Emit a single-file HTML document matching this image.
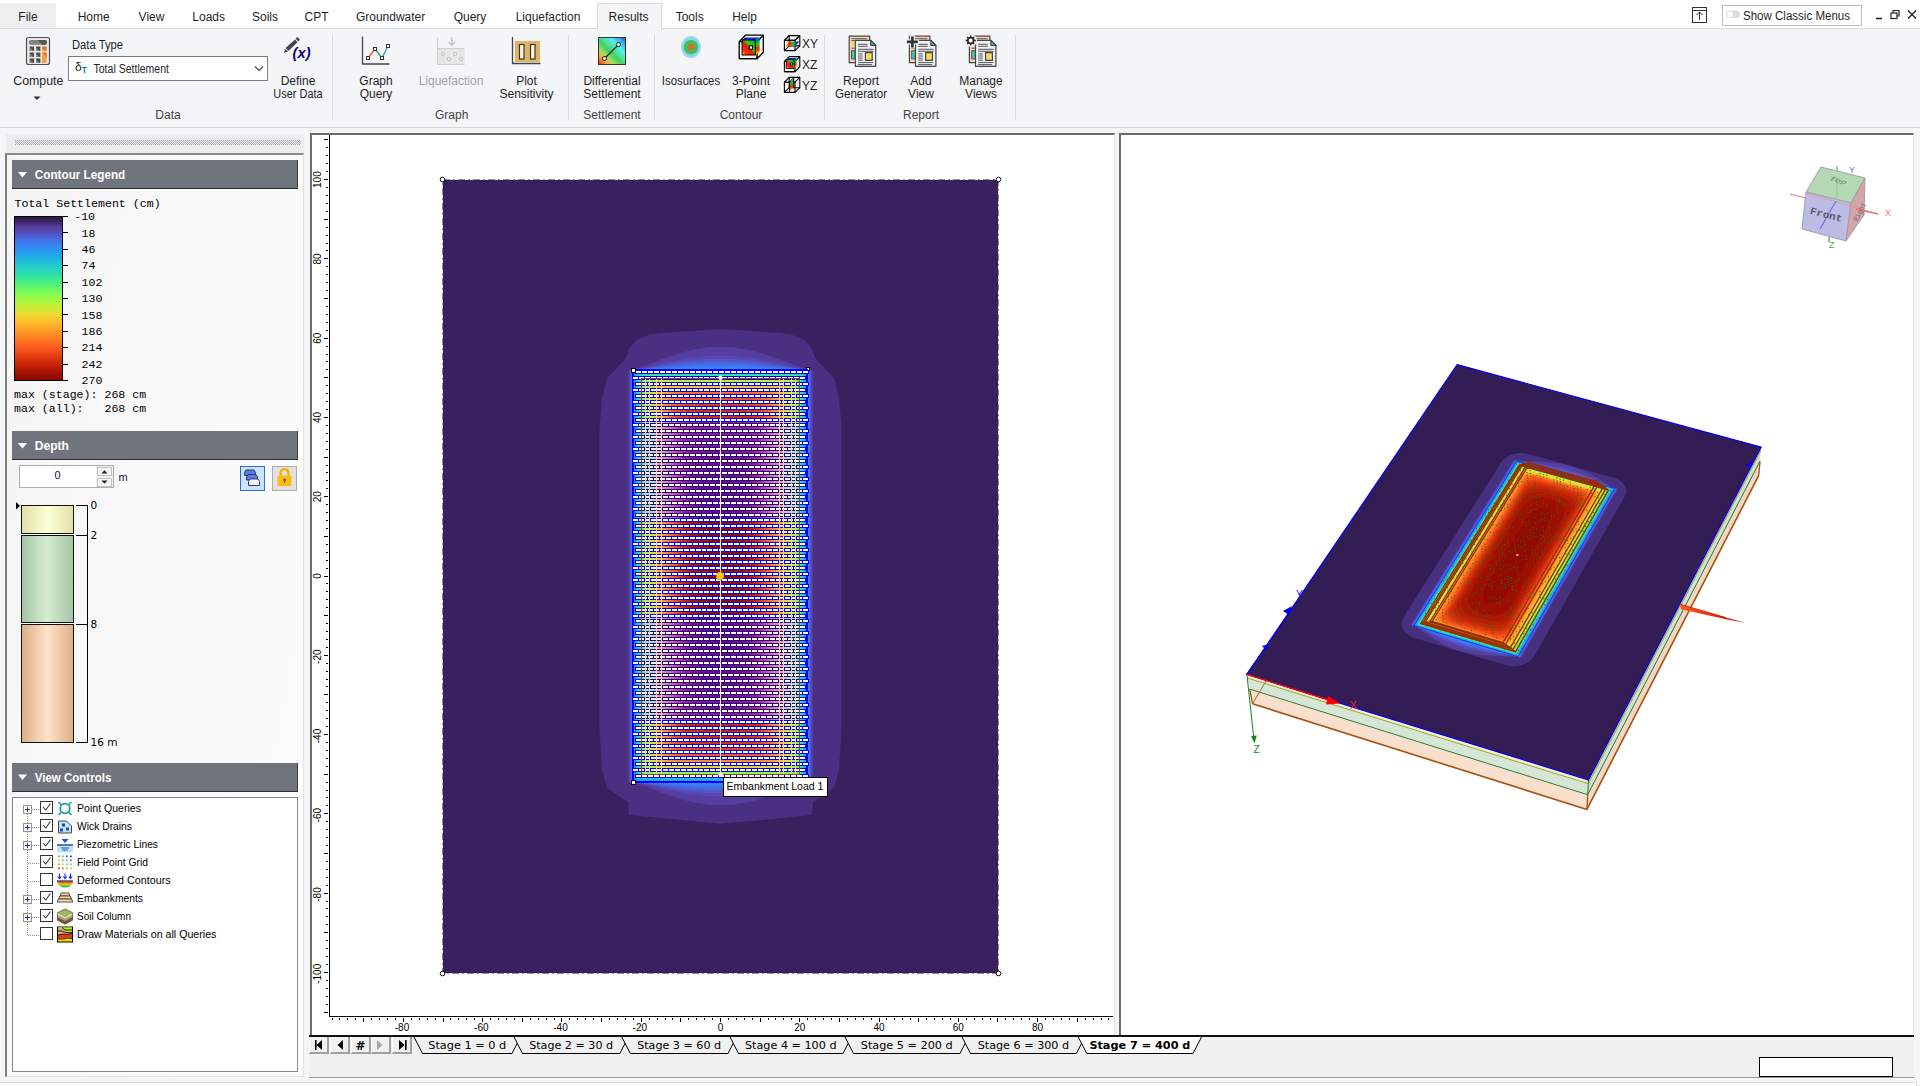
<!DOCTYPE html>
<html><head><meta charset="utf-8"><title>Settle3</title><style>
html,body{margin:0;padding:0}
body{width:1920px;height:1086px;position:relative;overflow:hidden;background:#f4f5f7;font-family:"Liberation Sans",sans-serif;font-size:12px;color:#1e1e1e}
.abs{position:absolute}
.t{position:absolute;white-space:nowrap;line-height:1}
svg{position:absolute;overflow:visible}
</style></head><body>
<div id="ribbon"><div class="abs" style="left:0px;top:0px;width:1920px;height:29px;background:#ffffff;"></div><div class="abs" style="left:0px;top:29px;width:1920px;height:99px;background:#f4f5f7;"></div><div class="abs" style="left:0px;top:28px;width:1920px;height:1px;background:#d8d9db;"></div><div class="abs" style="left:0px;top:127px;width:1920px;height:1px;background:#d6d7d9;"></div><div class="abs" style="left:0px;top:3px;width:56px;height:25px;background:#efefef;"></div><div class="abs" style="left:597px;top:3px;width:65px;height:26px;background:#f4f5f7;border:1px solid #d8d9db;box-sizing:border-box;border-bottom:none;"></div><div class="abs" style="left:1722px;top:5px;width:140px;height:21px;background:#ffffff;border:1px solid #bdbdbd;box-sizing:border-box;"></div><div class="abs" style="left:68px;top:56px;width:200px;height:25px;background:#ffffff;border:1px solid #7a7a7a;box-sizing:border-box;"></div><svg width="1920" height="1086" viewBox="0 0 1920 1086" style="left:0;top:0" font-family="Liberation Sans, sans-serif" ><text x="28" y="21" font-size="12" text-anchor="middle" fill="#1f1f1f">File</text><text x="93.7" y="21" font-size="12" text-anchor="middle" fill="#1f1f1f">Home</text><text x="151.5" y="21" font-size="12" text-anchor="middle" fill="#1f1f1f">View</text><text x="208.7" y="21" font-size="12" text-anchor="middle" fill="#1f1f1f">Loads</text><text x="265" y="21" font-size="12" text-anchor="middle" fill="#1f1f1f">Soils</text><text x="316.5" y="21" font-size="12" text-anchor="middle" fill="#1f1f1f">CPT</text><text x="390.6" y="21" font-size="12" text-anchor="middle" fill="#1f1f1f">Groundwater</text><text x="470" y="21" font-size="12" text-anchor="middle" fill="#1f1f1f">Query</text><text x="548" y="21" font-size="12" text-anchor="middle" fill="#1f1f1f">Liquefaction</text><text x="628.6" y="21" font-size="12" text-anchor="middle" fill="#1f1f1f">Results</text><text x="689.7" y="21" font-size="12" text-anchor="middle" fill="#1f1f1f">Tools</text><text x="744.5" y="21" font-size="12" text-anchor="middle" fill="#1f1f1f">Help</text><line x1="332.5" y1="35" x2="332.5" y2="120" stroke="#dcdde0" stroke-width="1"/><line x1="568.5" y1="35" x2="568.5" y2="120" stroke="#dcdde0" stroke-width="1"/><line x1="654.5" y1="35" x2="654.5" y2="120" stroke="#dcdde0" stroke-width="1"/><line x1="824.5" y1="35" x2="824.5" y2="120" stroke="#dcdde0" stroke-width="1"/><line x1="1015.5" y1="35" x2="1015.5" y2="120" stroke="#dcdde0" stroke-width="1"/><text x="168" y="118.7" font-size="12" text-anchor="middle" fill="#444444">Data</text><text x="451.7" y="118.7" font-size="12" text-anchor="middle" fill="#444444">Graph</text><text x="612" y="118.7" font-size="12" text-anchor="middle" fill="#444444">Settlement</text><text x="741" y="118.7" font-size="12" text-anchor="middle" fill="#444444">Contour</text><text x="921" y="118.7" font-size="12" text-anchor="middle" fill="#444444">Report</text><text x="38.3" y="85" font-size="12" text-anchor="middle" fill="#1f1f1f" textLength="50" lengthAdjust="spacingAndGlyphs">Compute</text><path d="M33.5 96.5h7l-3.5 3.5z" fill="#333"/><text x="72" y="48.8" font-size="12" fill="#1f1f1f" textLength="51" lengthAdjust="spacingAndGlyphs">Data Type</text><text x="75" y="70.6" font-size="12" fill="#222">δ</text><text x="81.8" y="72.8" font-size="8.5" font-weight="bold" fill="#0f8585">T</text><text x="93.5" y="72.8" font-size="12" fill="#1f1f1f" textLength="75.5" lengthAdjust="spacingAndGlyphs">Total Settlement</text><path d="M255 66.5l4 4l4-4" fill="none" stroke="#444" stroke-width="1.1"/><text x="298" y="85" font-size="12" text-anchor="middle" fill="#1f1f1f">Define</text><text x="298" y="98" font-size="12" text-anchor="middle" fill="#1f1f1f" textLength="49.3" lengthAdjust="spacingAndGlyphs">User Data</text><text x="376" y="85" font-size="12" text-anchor="middle" fill="#1f1f1f">Graph</text><text x="376" y="98" font-size="12" text-anchor="middle" fill="#1f1f1f">Query</text><text x="451" y="85" font-size="12" text-anchor="middle" fill="#a3a3a3">Liquefaction</text><text x="526.5" y="85" font-size="12" text-anchor="middle" fill="#1f1f1f">Plot</text><text x="526.5" y="98" font-size="12" text-anchor="middle" fill="#1f1f1f">Sensitivity</text><text x="612" y="85" font-size="12" text-anchor="middle" fill="#1f1f1f">Differential</text><text x="612" y="98" font-size="12" text-anchor="middle" fill="#1f1f1f">Settlement</text><text x="691" y="85" font-size="12" text-anchor="middle" fill="#1f1f1f" textLength="58.3" lengthAdjust="spacingAndGlyphs">Isosurfaces</text><text x="751" y="85" font-size="12" text-anchor="middle" fill="#1f1f1f">3-Point</text><text x="751" y="98" font-size="12" text-anchor="middle" fill="#1f1f1f">Plane</text><text x="861" y="85" font-size="12" text-anchor="middle" fill="#1f1f1f">Report</text><text x="861" y="98" font-size="12" text-anchor="middle" fill="#1f1f1f" textLength="52" lengthAdjust="spacingAndGlyphs">Generator</text><text x="921" y="85" font-size="12" text-anchor="middle" fill="#1f1f1f">Add</text><text x="921" y="98" font-size="12" text-anchor="middle" fill="#1f1f1f">View</text><text x="981" y="85" font-size="12" text-anchor="middle" fill="#1f1f1f">Manage</text><text x="981" y="98" font-size="12" text-anchor="middle" fill="#1f1f1f">Views</text><text x="802" y="47.8" font-size="12" fill="#1f1f1f">XY</text><text x="802" y="68.8" font-size="12" fill="#1f1f1f">XZ</text><text x="802" y="89.8" font-size="12" fill="#1f1f1f">YZ</text><text x="1743" y="20" font-size="12" fill="#1f1f1f" textLength="107" lengthAdjust="spacingAndGlyphs">Show Classic Menus</text><g><rect x="26.5" y="37.5" width="23" height="27" rx="2" fill="#e9e9e9" stroke="#505050" stroke-width="1.2"/><rect x="28.8" y="40" width="18.2" height="4.7" rx="2.2" fill="#828282"/><path d="M37.5 40h7.3a2.2 2.2 0 0 1 0 4.7h-2.6z" fill="#575757"/><rect x="29.7" y="46.5" width="4.4" height="4.5" fill="#4e4e4e"/><path d="M29.7 47.5v3.5h3.4z" fill="#8a8a8a"/><rect x="29.7" y="52.5" width="4.4" height="4.5" fill="#4e4e4e"/><path d="M29.7 53.5v3.5h3.4z" fill="#8a8a8a"/><rect x="29.7" y="58.4" width="4.4" height="4.5" fill="#4e4e4e"/><path d="M29.7 59.4v3.5h3.4z" fill="#8a8a8a"/><rect x="36" y="46.5" width="4.4" height="4.5" fill="#4e4e4e"/><path d="M36 47.5v3.5h3.4z" fill="#8a8a8a"/><rect x="36" y="52.5" width="4.4" height="4.5" fill="#4e4e4e"/><path d="M36 53.5v3.5h3.4z" fill="#8a8a8a"/><rect x="36" y="58.4" width="4.4" height="4.5" fill="#4e4e4e"/><path d="M36 59.4v3.5h3.4z" fill="#8a8a8a"/><rect x="42" y="46.5" width="4.6" height="4.5" fill="#e8701e"/><path d="M42 47.5v3.5h3.6z" fill="#f39a35"/><rect x="42" y="52.5" width="4.6" height="10.4" fill="#f5a338"/><path d="M42 52.5h4.6v5z" fill="#e8701e"/></g><g fill="#464646"><path d="M283.9 52.8l1.1-3.8l3.1 2.6z"/><path d="M285.6 48.1l9.4-8.7l2.5 2.8l-9.1 8.7z"/><path d="M295.6 38.4l1.9-1.5l2.5 2.8l-1.9 1.9z"/><text x="292.6" y="58.4" font-size="14.5" font-family="Liberation Sans, sans-serif" font-weight="bold" fill="#100878" font-style="italic" textLength="18" lengthAdjust="spacingAndGlyphs">(x)</text></g><g fill="none"><path d="M362.5 36.5v27.5h27" stroke="#444" stroke-width="1.3"/><path d="M368 58l7-9" stroke="#e8502a" stroke-width="1.3"/><path d="M375 49l7 9" stroke="#25a84a" stroke-width="1.3"/><path d="M382 58l6-12" stroke="#1f9fb0" stroke-width="1.3"/><g fill="#fff" stroke="#333" stroke-width="1"><rect x="366.5" y="56.5" width="3" height="3"/><rect x="373.5" y="47.5" width="3" height="3"/><rect x="380.5" y="56.5" width="3" height="3"/><rect x="386.5" y="44.5" width="3" height="3"/></g></g><g><rect x="437.5" y="48.5" width="27" height="16" fill="#e6e6e6"/><path d="M437.5 37.5v27h27" fill="none" stroke="#cfcfcf" stroke-width="1.2"/><path d="M437.5 48.5h27" stroke="#d0d0d0" stroke-width="1"/><path d="M451.8 37v7M448.5 42l3.3 3.5l3.3-3.5" fill="none" stroke="#c4c4c4" stroke-width="1.4"/><g fill="none" stroke="#c8c8c8" stroke-width="1"><circle cx="443" cy="54" r="1.7"/><circle cx="455" cy="54" r="1.7"/><circle cx="449" cy="59" r="1.7"/><circle cx="461" cy="59" r="1.7"/></g></g><g><rect x="515" y="41" width="25" height="21" fill="#dcb56a"/><path d="M512.5 37v26.5h28" fill="none" stroke="#444" stroke-width="1.3"/><rect x="519.5" y="44.5" width="4.5" height="14.5" fill="#f4f4f4" stroke="#4a3208" stroke-width="1.2"/><rect x="530.5" y="44.5" width="4.5" height="14.5" fill="#f4f4f4" stroke="#4a3208" stroke-width="1.2"/></g><defs><linearGradient id="gds" x1="0" y1="1" x2="1" y2="0"><stop offset="0" stop-color="#d02010"/><stop offset="0.1" stop-color="#f07020"/><stop offset="0.2" stop-color="#f0b040"/><stop offset="0.3" stop-color="#a0e060"/><stop offset="0.45" stop-color="#40d060"/><stop offset="0.56" stop-color="#50e0a0"/><stop offset="0.7" stop-color="#50f0f0"/><stop offset="0.85" stop-color="#40b0f0"/><stop offset="1" stop-color="#2040c0"/></linearGradient></defs><g><rect x="598.5" y="37.5" width="27" height="27" fill="url(#gds)" stroke="#333" stroke-width="1"/><path d="M604.5 58.5l14-14" stroke="#222" stroke-width="1.2"/><circle cx="604.5" cy="58.5" r="2.1" fill="#ffe8c8" stroke="#222"/><circle cx="618.5" cy="44.5" r="2.1" fill="#ffe8c8" stroke="#222"/></g><defs><radialGradient id="giso"><stop offset="0" stop-color="#b05a30"/><stop offset="0.35" stop-color="#8a7a38"/><stop offset="0.55" stop-color="#3cc060"/><stop offset="0.78" stop-color="#40c878"/><stop offset="0.8" stop-color="#80c8f0"/><stop offset="1" stop-color="#a8d8f8"/></radialGradient></defs><ellipse cx="691" cy="47.1" rx="10" ry="11" fill="#a4d8f8"/><ellipse cx="691" cy="47.1" rx="8.6" ry="9.4" fill="#8ccdf2"/><circle cx="691" cy="47.1" r="7.2" fill="#34c85a"/><circle cx="691" cy="47.1" r="5" fill="#58b850"/><circle cx="691" cy="47.1" r="3.4" fill="#c07838"/><g transform="translate(739.2,35.2)"><defs><linearGradient id="c739_2_35_2" gradientUnits="objectBoundingBox" x1="0" y1="1" x2="1" y2="0"><stop offset="0" stop-color="#f8f000"/><stop offset="0.2" stop-color="#ff3000"/><stop offset="0.45" stop-color="#f01800"/><stop offset="0.62" stop-color="#20d818"/><stop offset="0.85" stop-color="#10b838"/><stop offset="1" stop-color="#0838d8"/></linearGradient><linearGradient id="c739_2_35_2h" x1="0" y1="0" x2="1" y2="0"><stop offset="0" stop-color="#f8e800"/><stop offset="0.3" stop-color="#ff2000"/><stop offset="0.55" stop-color="#20d020"/><stop offset="0.8" stop-color="#0828d0"/><stop offset="1" stop-color="#0828d0"/></linearGradient><linearGradient id="c739_2_35_2v" x1="0" y1="0" x2="0" y2="1"><stop offset="0" stop-color="#0828d0"/><stop offset="0.35" stop-color="#20d020"/><stop offset="0.65" stop-color="#ff2000"/><stop offset="1" stop-color="#f8e800"/></linearGradient></defs><g fill="none" stroke="#000" stroke-width="1.3" stroke-linejoin="round"><path d="M0 6.5L6.2 0H24.099999999999998V17.0L17.9 23.5"/><path d="M17.9 6.5L24.099999999999998 0"/><rect x="0" y="6.5" width="17.9" height="17.0"/></g><path d="M2.9 4.8L5.4 2.3H20.4L16.2 4.8z" fill="#0830d8"/><path d="M16.2 4.8L20.4 2.3V16.8L16.2 19.8z" fill="url(#c739_2_35_2v)"/><rect x="2.9" y="4.8" width="13.3" height="15.0" fill="url(#c739_2_35_2)" stroke="#000" stroke-width="1.0"/><path d="M0 23.5H17.9V20.5" fill="none" stroke="#000" stroke-width="1.3"/><rect x="10.0" y="10.6" width="3.4" height="3.4" fill="#fff" stroke="#000" stroke-width="1.1"/></g><g transform="translate(784.4,35.6)"><defs><linearGradient id="c784_4_35_6" gradientUnits="objectBoundingBox" x1="0" y1="1" x2="1" y2="0"><stop offset="0" stop-color="#f8f000"/><stop offset="0.2" stop-color="#ff3000"/><stop offset="0.45" stop-color="#f01800"/><stop offset="0.62" stop-color="#20d818"/><stop offset="0.85" stop-color="#10b838"/><stop offset="1" stop-color="#0838d8"/></linearGradient><linearGradient id="c784_4_35_6h" x1="0" y1="0" x2="1" y2="0"><stop offset="0" stop-color="#f8e800"/><stop offset="0.3" stop-color="#ff2000"/><stop offset="0.55" stop-color="#20d020"/><stop offset="0.8" stop-color="#0828d0"/><stop offset="1" stop-color="#0828d0"/></linearGradient><linearGradient id="c784_4_35_6v" x1="0" y1="0" x2="0" y2="1"><stop offset="0" stop-color="#0828d0"/><stop offset="0.35" stop-color="#20d020"/><stop offset="0.65" stop-color="#ff2000"/><stop offset="1" stop-color="#f8e800"/></linearGradient></defs><g fill="none" stroke="#000" stroke-width="1.1" stroke-linejoin="round"><rect x="4.8" y="0" width="10.6" height="10.3"/><path d="M0 4.7L4.8 0M10.6 4.7L15.399999999999999 0M0 15.0L4.8 10.3M10.6 15.0L15.399999999999999 10.3"/><rect x="0" y="4.7" width="10.6" height="10.3"/></g><path d="M0.8 11L5.2 5.8H15L10.6 11z" fill="url(#c784_4_35_6h)"/><path d="M0 4.7L4.8 0M10.6 4.7L15.399999999999999 0M0 4.7H10.6" stroke="#000" stroke-width="1.1" fill="none"/></g><g transform="translate(784.4,56.6)"><defs><linearGradient id="c784_4_56_6" gradientUnits="objectBoundingBox" x1="0" y1="1" x2="1" y2="0"><stop offset="0" stop-color="#f8f000"/><stop offset="0.2" stop-color="#ff3000"/><stop offset="0.45" stop-color="#f01800"/><stop offset="0.62" stop-color="#20d818"/><stop offset="0.85" stop-color="#10b838"/><stop offset="1" stop-color="#0838d8"/></linearGradient><linearGradient id="c784_4_56_6h" x1="0" y1="0" x2="1" y2="0"><stop offset="0" stop-color="#f8e800"/><stop offset="0.3" stop-color="#ff2000"/><stop offset="0.55" stop-color="#20d020"/><stop offset="0.8" stop-color="#0828d0"/><stop offset="1" stop-color="#0828d0"/></linearGradient><linearGradient id="c784_4_56_6v" x1="0" y1="0" x2="0" y2="1"><stop offset="0" stop-color="#0828d0"/><stop offset="0.35" stop-color="#20d020"/><stop offset="0.65" stop-color="#ff2000"/><stop offset="1" stop-color="#f8e800"/></linearGradient></defs><g fill="none" stroke="#000" stroke-width="1.1" stroke-linejoin="round"><path d="M0 4.7L4.8 0H15.399999999999999V10.3L10.6 15.0"/><path d="M10.6 4.7L15.399999999999999 0"/><rect x="0" y="4.7" width="10.6" height="10.3"/></g><path d="M1.74 2.88L3.24 1.38H12.24L9.72 2.88z" fill="#0830d8"/><path d="M9.72 2.88L12.24 1.38V10.08L9.72 11.88z" fill="url(#c784_4_56_6v)"/><rect x="1.74" y="2.88" width="7.98" height="9.0" fill="url(#c784_4_56_6)" stroke="#000" stroke-width="0.8"/><path d="M0 15.0H10.6V13.2" fill="none" stroke="#000" stroke-width="1.1"/><rect x="6.0" y="6.36" width="2.04" height="2.04" fill="#fff" stroke="#000" stroke-width="0.9"/></g><g transform="translate(784.4,77.4)"><defs><linearGradient id="c784_4_77_4" gradientUnits="objectBoundingBox" x1="0" y1="1" x2="1" y2="0"><stop offset="0" stop-color="#f8f000"/><stop offset="0.2" stop-color="#ff3000"/><stop offset="0.45" stop-color="#f01800"/><stop offset="0.62" stop-color="#20d818"/><stop offset="0.85" stop-color="#10b838"/><stop offset="1" stop-color="#0838d8"/></linearGradient><linearGradient id="c784_4_77_4h" x1="0" y1="0" x2="1" y2="0"><stop offset="0" stop-color="#f8e800"/><stop offset="0.3" stop-color="#ff2000"/><stop offset="0.55" stop-color="#20d020"/><stop offset="0.8" stop-color="#0828d0"/><stop offset="1" stop-color="#0828d0"/></linearGradient><linearGradient id="c784_4_77_4v" x1="0" y1="0" x2="0" y2="1"><stop offset="0" stop-color="#0828d0"/><stop offset="0.35" stop-color="#20d020"/><stop offset="0.65" stop-color="#ff2000"/><stop offset="1" stop-color="#f8e800"/></linearGradient></defs><g fill="none" stroke="#000" stroke-width="1.1" stroke-linejoin="round"><rect x="4.8" y="0" width="10.6" height="10.3"/><path d="M0 4.7L4.8 0M10.6 4.7L15.399999999999999 0M0 15.0L4.8 10.3M10.6 15.0L15.399999999999999 10.3"/><rect x="0" y="4.7" width="10.6" height="10.3"/></g><path d="M5.3 13.5V5.5L9.6 1.5V9.5z" fill="url(#c784_4_77_4v)"/><path d="M5.2 15.0V4.7L9.4 0V10.3" stroke="#000" stroke-width="0.9" fill="none"/></g><g transform="translate(848.7,35.7)"><rect x="0.5" y="0.5" width="20.5" height="26.5" fill="#fbd9b5" stroke="#454548" stroke-width="1.2" stroke-linejoin="round"/><path d="M2.5 3h16M2.5 5h14M2.5 12.5h4" stroke="#454548" stroke-width="0.9"/><rect x="2.5" y="5.8" width="4" height="4.4" fill="#fad860"/><rect x="2.8" y="15" width="3.6" height="8.2" fill="#48cba8" stroke="#454548" stroke-width="0.9"/><path d="M6.6 4.6h15.4l5 5v21h-20.4z" fill="#eef0f4" stroke="#454548" stroke-width="1.2" stroke-linejoin="round"/><path d="M22 4.6v5h5z" fill="#48cba8" stroke="#454548" stroke-width="1.2" stroke-linejoin="round"/><path d="M9.3 8.6h9.6M9.3 10.6h9.6M9.3 13.6h15.4M9.3 15.6h15.4M9.3 18.2h4.6M9.3 20.3h4.6M9.3 22.4h4.6M9.3 24.5h4.6M9.3 26.9h15M9.3 28.9h14" stroke="#454548" stroke-width="0.9"/><rect x="16.7" y="17" width="6.8" height="7.6" fill="#fad860" stroke="#454548" stroke-width="1.2" stroke-linejoin="round"/></g><g transform="translate(908.9,35.7)"><rect x="0.5" y="0.5" width="20.5" height="26.5" fill="#fbd9b5" stroke="#454548" stroke-width="1.2" stroke-linejoin="round"/><path d="M2.5 3h16M2.5 5h14M2.5 12.5h4" stroke="#454548" stroke-width="0.9"/><rect x="2.5" y="5.8" width="4" height="4.4" fill="#fad860"/><rect x="2.8" y="15" width="3.6" height="8.2" fill="#48cba8" stroke="#454548" stroke-width="0.9"/><path d="M6.6 4.6h15.4l5 5v21h-20.4z" fill="#eef0f4" stroke="#454548" stroke-width="1.2" stroke-linejoin="round"/><path d="M22 4.6v5h5z" fill="#48cba8" stroke="#454548" stroke-width="1.2" stroke-linejoin="round"/><path d="M9.3 8.6h9.6M9.3 10.6h9.6M9.3 13.6h15.4M9.3 15.6h15.4M9.3 18.2h4.6M9.3 20.3h4.6M9.3 22.4h4.6M9.3 24.5h4.6M9.3 26.9h15M9.3 28.9h14" stroke="#454548" stroke-width="0.9"/><rect x="16.7" y="17" width="6.8" height="7.6" fill="#fad860" stroke="#454548" stroke-width="1.2" stroke-linejoin="round"/><path d="M3.5 -0.5v13M-3 6.2h13" stroke="#f4f5f7" stroke-width="5"/><path d="M3.5 0.8v11M-2 6.2h11" stroke="#33333a" stroke-width="2.7"/></g><g transform="translate(968.9,35.7)"><rect x="0.5" y="0.5" width="20.5" height="26.5" fill="#fbd9b5" stroke="#454548" stroke-width="1.2" stroke-linejoin="round"/><path d="M2.5 3h16M2.5 5h14M2.5 12.5h4" stroke="#454548" stroke-width="0.9"/><rect x="2.5" y="5.8" width="4" height="4.4" fill="#fad860"/><rect x="2.8" y="15" width="3.6" height="8.2" fill="#48cba8" stroke="#454548" stroke-width="0.9"/><path d="M6.6 4.6h15.4l5 5v21h-20.4z" fill="#eef0f4" stroke="#454548" stroke-width="1.2" stroke-linejoin="round"/><path d="M22 4.6v5h5z" fill="#48cba8" stroke="#454548" stroke-width="1.2" stroke-linejoin="round"/><path d="M9.3 8.6h9.6M9.3 10.6h9.6M9.3 13.6h15.4M9.3 15.6h15.4M9.3 18.2h4.6M9.3 20.3h4.6M9.3 22.4h4.6M9.3 24.5h4.6M9.3 26.9h15M9.3 28.9h14" stroke="#454548" stroke-width="0.9"/><rect x="16.7" y="17" width="6.8" height="7.6" fill="#fad860" stroke="#454548" stroke-width="1.2" stroke-linejoin="round"/><circle cx="1.8" cy="4.8" r="6.2" fill="#f4f5f7"/><circle cx="1.8" cy="4.8" r="3" fill="none" stroke="#222" stroke-width="1.5"/><path d="M1.8 -0.3v10.2M-3.3 4.8h10.2M-1.8 1.2l7.2 7.2M5.4 1.2l-7.2 7.2" stroke="#222" stroke-width="1.3"/><circle cx="1.8" cy="4.8" r="1.9" fill="#fff"/></g><g fill="none" stroke="#333" stroke-width="1"><rect x="1692.5" y="7.5" width="14" height="15"/><path d="M1692.5 10.5h14M1699.5 20v-8M1696.5 15l3-3l3 3"/></g><rect x="1726" y="10.5" width="14" height="7.5" rx="3.7" fill="#dcdcdc"/><circle cx="1730" cy="14.2" r="3" fill="#fdfdfd"/><path d="M1876 18.5h6" stroke="#222" stroke-width="1.6"/><g fill="none" stroke="#222" stroke-width="1.2"><rect x="1891" y="13" width="6" height="5.5"/><path d="M1893 13v-2.5h6v5.5h-2"/></g><path d="M1908 10.5l8 8M1916 10.5l-8 8" stroke="#222" stroke-width="1.3"/></svg></div>
<div id="left"><div class="abs" style="left:5px;top:133px;width:300px;height:21px;background:#ededef;border:1px solid #f6f6f7;box-sizing:border-box;"></div><div class="abs" style="left:5px;top:153px;width:299px;height:924px;background:linear-gradient(100deg,#f4f4f4 0%,#fafafa 55%,#fcfcfc 100%);border-left:2px solid #7d7d7d;border-top:2px solid #8a8a8a;border-right:1px solid #e3e3e3;border-bottom:1px solid #e3e3e3;box-sizing:border-box;"></div><div class="abs" style="left:12px;top:160px;width:286px;height:29px;background:#70757d;border-right:1px solid #3c3c3c;border-bottom:1px solid #2c2c2c;box-sizing:border-box;"></div><div class="abs" style="left:12px;top:431px;width:286px;height:29px;background:#70757d;border-right:1px solid #3c3c3c;border-bottom:1px solid #2c2c2c;box-sizing:border-box;"></div><div class="abs" style="left:12px;top:763px;width:286px;height:29px;background:#70757d;border-right:1px solid #3c3c3c;border-bottom:1px solid #2c2c2c;box-sizing:border-box;"></div><div class="abs" style="left:12px;top:797px;width:286px;height:275px;background:#ffffff;border:1px solid #828790;box-sizing:border-box;"></div><div class="abs" style="left:14px;top:216px;width:49px;height:165px;background:linear-gradient(180deg,#2f1a45 0.00%,#3a205e 2.14%,#4a2f82 4.29%,#563ea0 6.43%,#5648b5 8.57%,#5256c8 10.71%,#4a66dc 12.86%,#4076ec 15.00%,#3586f4 17.86%,#2a94f0 20.00%,#25a4ea 22.86%,#20b4e0 25.71%,#20c4d4 28.57%,#24d0c4 31.43%,#2cdcb0 34.29%,#38e69c 37.14%,#48ee84 40.00%,#60f66c 42.86%,#78fa58 45.71%,#90fc4c 48.57%,#a8f840 51.43%,#c0f03a 54.29%,#d8e636 57.14%,#ecd834 60.00%,#fac82e 62.86%,#ffb62a 65.71%,#ffa228 68.57%,#ff9226 71.43%,#ff8024 74.29%,#fe6c20 77.14%,#fa5a1c 80.00%,#f04a16 82.86%,#e23a10 85.71%,#d22c08 88.57%,#c02004 91.43%,#ac1602 94.29%,#980c00 97.14%,#8a0800 100.00%);border:1px solid #000;box-sizing:border-box;"></div><div class="abs" style="left:19px;top:465px;width:95px;height:23px;background:#ffffff;border:1px solid #adadad;box-sizing:border-box;"></div><div class="abs" style="left:96px;top:466px;width:17px;height:21px;background:#f0f0f0;"></div><div class="abs" style="left:97px;top:467px;width:15px;height:9px;background:#f4f4f4;border:1px solid #c4c4c4;box-sizing:border-box;"></div><div class="abs" style="left:97px;top:478px;width:15px;height:9px;background:#f4f4f4;border:1px solid #c4c4c4;box-sizing:border-box;"></div><div class="abs" style="left:240px;top:466px;width:25px;height:25px;background:#cce4f7;border:1px solid #2a6fd0;box-sizing:border-box;"></div><div class="abs" style="left:272px;top:466px;width:25px;height:25px;background:#e1e1e1;border:1px solid #adadad;box-sizing:border-box;"></div><div class="abs" style="left:21px;top:505px;width:53px;height:29px;background:linear-gradient(90deg,#e4e0aa,#fcfed6 50%,#e4e0aa);border:1px solid #111;box-sizing:border-box;"></div><div class="abs" style="left:21px;top:535px;width:53px;height:88px;background:linear-gradient(90deg,#a6c4a6,#d6ecd4 50%,#a6c4a6);border:1px solid #111;box-sizing:border-box;"></div><div class="abs" style="left:21px;top:624px;width:53px;height:119px;background:linear-gradient(90deg,#deb088,#fee2c6 50%,#deb088);border:1px solid #111;box-sizing:border-box;"></div><svg width="1920" height="1086" viewBox="0 0 1920 1086" style="left:0;top:0" font-family="Liberation Sans, sans-serif" ><defs><pattern id="grip" width="4" height="4" patternUnits="userSpaceOnUse" x="15" y="140"><rect x="0" y="0" width="1" height="1" fill="#a8a8a8"/><rect x="2" y="0" width="1" height="1" fill="#a8a8a8"/><rect x="1" y="1" width="1" height="1" fill="#b8b8b8"/><rect x="3" y="1" width="1" height="1" fill="#b8b8b8"/><rect x="0" y="2" width="1" height="1" fill="#a8a8a8"/><rect x="2" y="2" width="1" height="1" fill="#a8a8a8"/><rect x="1" y="3" width="1" height="1" fill="#b8b8b8"/><rect x="3" y="3" width="1" height="1" fill="#b8b8b8"/></pattern></defs><rect x="15" y="140" width="286" height="5" fill="url(#grip)"/><path d="M18 172h9l-4.5 5.5z" fill="#fff"/><text x="34.8" y="179" font-size="13" font-weight="bold" fill="#ffffff" textLength="90.5" lengthAdjust="spacingAndGlyphs">Contour Legend</text><path d="M18 443h9l-4.5 5.5z" fill="#fff"/><text x="34.8" y="450" font-size="13" font-weight="bold" fill="#ffffff" textLength="34" lengthAdjust="spacingAndGlyphs">Depth</text><path d="M18 774.5h9l-4.5 5.5z" fill="#fff"/><text x="34.8" y="781.5" font-size="13" font-weight="bold" fill="#ffffff" textLength="76.5" lengthAdjust="spacingAndGlyphs">View Controls</text><text x="14.5" y="207" font-size="11.6" font-family="Liberation Mono, monospace" fill="#000">Total Settlement (cm)</text><path d="M63 216.5h5" stroke="#000" stroke-width="1" shape-rendering="crispEdges"/><text x="74.2" y="220.1" font-size="11.6" font-family="Liberation Mono, monospace" fill="#000">-10</text><path d="M63 232.5h5" stroke="#000" stroke-width="1" shape-rendering="crispEdges"/><text x="81.6" y="236.5" font-size="11.6" font-family="Liberation Mono, monospace" fill="#000">18</text><path d="M63 249.5h5" stroke="#000" stroke-width="1" shape-rendering="crispEdges"/><text x="81.6" y="252.9" font-size="11.6" font-family="Liberation Mono, monospace" fill="#000">46</text><path d="M63 265.5h5" stroke="#000" stroke-width="1" shape-rendering="crispEdges"/><text x="81.6" y="269.3" font-size="11.6" font-family="Liberation Mono, monospace" fill="#000">74</text><path d="M63 282.5h5" stroke="#000" stroke-width="1" shape-rendering="crispEdges"/><text x="81.6" y="285.7" font-size="11.6" font-family="Liberation Mono, monospace" fill="#000">102</text><path d="M63 298.5h5" stroke="#000" stroke-width="1" shape-rendering="crispEdges"/><text x="81.6" y="302.1" font-size="11.6" font-family="Liberation Mono, monospace" fill="#000">130</text><path d="M63 314.5h5" stroke="#000" stroke-width="1" shape-rendering="crispEdges"/><text x="81.6" y="318.5" font-size="11.6" font-family="Liberation Mono, monospace" fill="#000">158</text><path d="M63 331.5h5" stroke="#000" stroke-width="1" shape-rendering="crispEdges"/><text x="81.6" y="334.9" font-size="11.6" font-family="Liberation Mono, monospace" fill="#000">186</text><path d="M63 347.5h5" stroke="#000" stroke-width="1" shape-rendering="crispEdges"/><text x="81.6" y="351.3" font-size="11.6" font-family="Liberation Mono, monospace" fill="#000">214</text><path d="M63 364.5h5" stroke="#000" stroke-width="1" shape-rendering="crispEdges"/><text x="81.6" y="367.7" font-size="11.6" font-family="Liberation Mono, monospace" fill="#000">242</text><path d="M63 380.5h5" stroke="#000" stroke-width="1" shape-rendering="crispEdges"/><text x="81.6" y="384.1" font-size="11.6" font-family="Liberation Mono, monospace" fill="#000">270</text><text x="14" y="398" font-size="11.6" font-family="Liberation Mono, monospace" fill="#000" xml:space="preserve">max (stage): 268 cm</text><text x="14" y="412" font-size="11.6" font-family="Liberation Mono, monospace" fill="#000" xml:space="preserve">max (all):   268 cm</text><text x="57.5" y="479" font-size="11" text-anchor="middle" fill="#201040">0</text><text x="118.5" y="481" font-size="11" fill="#201040">m</text><path d="M101.5 473.5h6l-3-3.2zM101.5 480.5h6l-3 3.2z" fill="#222"/><g stroke="#2a3a9a" stroke-width="1" fill="#5a78d8"><path d="M244.5 472.5l1.5-2.5h8l1.5 2.5v3h-11z"/><path d="M246.5 477l1.5-2.5h8l1.5 2.5v3h-11z"/><path d="M248.5 481.5l1.5-2.5h8l1.5 2.5v4h-11z" fill="#f4f6ff"/></g><g><path d="M280.5 476v-3a4 4 0 0 1 8 0v3" fill="none" stroke="#f0b400" stroke-width="2.4"/><rect x="277.5" y="475.5" width="14" height="10.5" rx="1.5" fill="#fcbc10"/><circle cx="284.5" cy="479.8" r="1.5" fill="#7a6a50"/><rect x="283.9" y="480" width="1.2" height="3.2" fill="#7a6a50"/></g><path d="M16 502v7.5l4-3.7z" fill="#000"/><path d="M76 505.5h11.5v237h-11.5M76 535.5h11.5M76 624.5h11.5" fill="none" stroke="#000" stroke-width="1"/><text x="90.5" y="509" font-size="10.5" font-family="DejaVu Sans, Liberation Sans, sans-serif" fill="#000">0</text><text x="90.5" y="539" font-size="10.5" font-family="DejaVu Sans, Liberation Sans, sans-serif" fill="#000">2</text><text x="90.5" y="628" font-size="10.5" font-family="DejaVu Sans, Liberation Sans, sans-serif" fill="#000">8</text><text x="90.5" y="746" font-size="10.5" font-family="DejaVu Sans, Liberation Sans, sans-serif" fill="#000">16 m</text><path d="M27.5 814v121.5" fill="none" stroke="#8e8e8e" stroke-width="1" stroke-dasharray="1 1" shape-rendering="crispEdges"/><path d="M28 809.5h12" stroke="#8e8e8e" stroke-width="1" stroke-dasharray="1 1" shape-rendering="crispEdges"/><g shape-rendering="crispEdges"><rect x="23.5" y="805.5" width="8" height="8" fill="#fcfcfc" stroke="#919191"/><path d="M25 809.5h5M27.5 807.0v5" stroke="#22339a" stroke-width="1"/></g><rect x="40.5" y="801.5" width="12" height="12" fill="#fff" stroke="#333" shape-rendering="crispEdges"/><path d="M43 807.0l2.7 3l4.8-6.5" fill="none" stroke="#333" stroke-width="1.1"/><text x="77" y="811.9" font-size="11" fill="#000" textLength="64" lengthAdjust="spacingAndGlyphs">Point Queries</text><g transform="translate(57,800.5)"><circle cx="8" cy="8" r="4.8" fill="none" stroke="#1a9a9a" stroke-width="1.7"/><path d="M1.5 1.5l3 3M14.5 1.5l-3 3M1.5 14.5l3-3M14.5 14.5l-3-3" stroke="#1a9a9a" stroke-width="1.5"/></g><path d="M28 827.5h12" stroke="#8e8e8e" stroke-width="1" stroke-dasharray="1 1" shape-rendering="crispEdges"/><g shape-rendering="crispEdges"><rect x="23.5" y="823.5" width="8" height="8" fill="#fcfcfc" stroke="#919191"/><path d="M25 827.5h5M27.5 825.0v5" stroke="#22339a" stroke-width="1"/></g><rect x="40.5" y="819.5" width="12" height="12" fill="#fff" stroke="#333" shape-rendering="crispEdges"/><path d="M43 825.0l2.7 3l4.8-6.5" fill="none" stroke="#333" stroke-width="1.1"/><text x="77" y="829.9" font-size="11" fill="#000" textLength="55" lengthAdjust="spacingAndGlyphs">Wick Drains</text><g transform="translate(57,818.5)"><path d="M1.5 2.5h8l5 5v7h-13z" fill="#bfe3f7" stroke="#444" stroke-width="1"/><g fill="#fff" stroke="#1a4aaa" stroke-width="1"><rect x="5.5" y="5.5" width="2" height="2"/><rect x="3.5" y="10.5" width="2" height="2"/><rect x="9.5" y="9.5" width="2" height="2"/></g></g><path d="M28 845.5h12" stroke="#8e8e8e" stroke-width="1" stroke-dasharray="1 1" shape-rendering="crispEdges"/><g shape-rendering="crispEdges"><rect x="23.5" y="841.5" width="8" height="8" fill="#fcfcfc" stroke="#919191"/><path d="M25 845.5h5M27.5 843.0v5" stroke="#22339a" stroke-width="1"/></g><rect x="40.5" y="837.5" width="12" height="12" fill="#fff" stroke="#333" shape-rendering="crispEdges"/><path d="M43 843.0l2.7 3l4.8-6.5" fill="none" stroke="#333" stroke-width="1.1"/><text x="77" y="847.9" font-size="11" fill="#000" textLength="81" lengthAdjust="spacingAndGlyphs">Piezometric Lines</text><g transform="translate(57,836.5)"><rect x="0" y="9" width="16" height="7" fill="#bfe3f7"/><path d="M4.5 2.5h7l-3.5 4z" fill="#1a50d0"/><path d="M0 8.5h16" stroke="#1a3a9a" stroke-width="1.4"/><path d="M4 11.5h8M5.5 13.5h5" stroke="#1a50d0" stroke-width="1"/></g><path d="M28 863.5h12" stroke="#8e8e8e" stroke-width="1" stroke-dasharray="1 1" shape-rendering="crispEdges"/><rect x="40.5" y="855.5" width="12" height="12" fill="#fff" stroke="#333" shape-rendering="crispEdges"/><path d="M43 861.0l2.7 3l4.8-6.5" fill="none" stroke="#333" stroke-width="1.1"/><text x="77" y="865.9" font-size="11" fill="#000" textLength="71" lengthAdjust="spacingAndGlyphs">Field Point Grid</text><g transform="translate(57,854.5)"><rect x="1" y="1" width="1.7" height="1.7" fill="#50c040"/><rect x="5" y="1" width="1.7" height="1.7" fill="#30c0c0"/><rect x="9" y="1" width="1.7" height="1.7" fill="#2060e0"/><rect x="13" y="1" width="1.7" height="1.7" fill="#1a3a9a"/><rect x="1" y="5" width="1.7" height="1.7" fill="#e0d020"/><rect x="5" y="5" width="1.7" height="1.7" fill="#50d050"/><rect x="9" y="5" width="1.7" height="1.7" fill="#30d0d0"/><rect x="13" y="5" width="1.7" height="1.7" fill="#2080f0"/><rect x="1" y="9" width="1.7" height="1.7" fill="#f08020"/><rect x="5" y="9" width="1.7" height="1.7" fill="#e0d020"/><rect x="9" y="9" width="1.7" height="1.7" fill="#60e060"/><rect x="13" y="9" width="1.7" height="1.7" fill="#30e0d0"/><rect x="1" y="13" width="1.7" height="1.7" fill="#e02020"/><rect x="5" y="13" width="1.7" height="1.7" fill="#f06020"/><rect x="9" y="13" width="1.7" height="1.7" fill="#f0a020"/><rect x="13" y="13" width="1.7" height="1.7" fill="#a0e020"/></g><path d="M28 881.5h12" stroke="#8e8e8e" stroke-width="1" stroke-dasharray="1 1" shape-rendering="crispEdges"/><rect x="40.5" y="873.5" width="12" height="12" fill="#fff" stroke="#333" shape-rendering="crispEdges"/><text x="77" y="883.9" font-size="11" fill="#000" textLength="93.6" lengthAdjust="spacingAndGlyphs">Deformed Contours</text><g transform="translate(57,872.5)"><defs><linearGradient id="gdc" x1="0" y1="0" x2="0" y2="1"><stop offset="0" stop-color="#e02020"/><stop offset="0.45" stop-color="#f0d020"/><stop offset="0.8" stop-color="#40c040"/></linearGradient></defs><path d="M0 9h16c-1 4-4 6-8 6s-7-2-8-6z" fill="url(#gdc)"/><path d="M0 8.5h16" stroke="#222" stroke-width="1.2"/><path d="M2.5 1v5M8 1v5M13.5 1v5M0.8 4l1.7 2.2l1.7-2.2M6.3 4l1.7 2.2l1.7-2.2M11.8 4l1.7 2.2l1.7-2.2" fill="none" stroke="#1a30e0" stroke-width="1.1"/></g><path d="M28 899.5h12" stroke="#8e8e8e" stroke-width="1" stroke-dasharray="1 1" shape-rendering="crispEdges"/><g shape-rendering="crispEdges"><rect x="23.5" y="895.5" width="8" height="8" fill="#fcfcfc" stroke="#919191"/><path d="M25 899.5h5M27.5 897.0v5" stroke="#22339a" stroke-width="1"/></g><rect x="40.5" y="891.5" width="12" height="12" fill="#fff" stroke="#333" shape-rendering="crispEdges"/><path d="M43 897.0l2.7 3l4.8-6.5" fill="none" stroke="#333" stroke-width="1.1"/><text x="77" y="901.9" font-size="11" fill="#000" textLength="66" lengthAdjust="spacingAndGlyphs">Embankments</text><g transform="translate(57,890.5)"><g fill="#f6d4a4" stroke="#4a4038" stroke-width="0.9" stroke-linejoin="round"><path d="M4 2.5h8l1 3h-10z"/><path d="M3 5.5h10l1.5 3h-13z"/><path d="M1.5 8.5h13l1.5 3h-16z"/></g></g><path d="M28 917.5h12" stroke="#8e8e8e" stroke-width="1" stroke-dasharray="1 1" shape-rendering="crispEdges"/><g shape-rendering="crispEdges"><rect x="23.5" y="913.5" width="8" height="8" fill="#fcfcfc" stroke="#919191"/><path d="M25 917.5h5M27.5 915.0v5" stroke="#22339a" stroke-width="1"/></g><rect x="40.5" y="909.5" width="12" height="12" fill="#fff" stroke="#333" shape-rendering="crispEdges"/><path d="M43 915.0l2.7 3l4.8-6.5" fill="none" stroke="#333" stroke-width="1.1"/><text x="77" y="919.9" font-size="11" fill="#000" textLength="54" lengthAdjust="spacingAndGlyphs">Soil Column</text><g transform="translate(57,908.5)"><path d="M8 0.5l7.5 3.8v7.4l-7.5 4l-7.5-4v-7.4z" fill="#7a6a4a" stroke="#3a3a2a" stroke-width="0.7"/><path d="M8 0.8l7.2 3.6l-7.2 3.8l-7.2-3.8z" fill="#98b85c"/><path d="M0.8 4.6l7.2 3.8l7.2-3.8v2.2l-7.2 3.8l-7.2-3.8z" fill="#e8dcb8"/><path d="M0.8 6.8l7.2 3.8l7.2-3.8v2.2l-7.2 3.8l-7.2-3.8z" fill="#b8a070"/><path d="M0.8 9l7.2 3.8l7.2-3.8v2.4l-7.2 3.9l-7.2-3.9z" fill="#6a5a3a"/></g><path d="M28 935.5h12" stroke="#8e8e8e" stroke-width="1" stroke-dasharray="1 1" shape-rendering="crispEdges"/><rect x="40.5" y="927.5" width="12" height="12" fill="#fff" stroke="#333" shape-rendering="crispEdges"/><text x="77" y="937.9" font-size="11" fill="#000" textLength="139.4" lengthAdjust="spacingAndGlyphs">Draw Materials on all Queries</text><g transform="translate(57,926.5)"><rect x="0.5" y="0.5" width="15" height="15" fill="#f8d800" stroke="#000"/><path d="M1 1h14v5h-6l-3-1.5h-5z" fill="#b8f000"/><path d="M1 1h4l3 2.5h2l0 2.5h-2l-3-1.5h-4z" fill="#d8b088"/><path d="M1 4.5h4l3 1.5h7v5l-5-1l-3 1.5h-6z" fill="#d8b088"/><path d="M1 8.5l5-1l3 0.5l6-1v4.5l-5-0.5l-3 1h-6z" fill="#e83818"/><path d="M1 4.5h4l3 1.5h7M1 8.5l5-1l3 0.5l6-1M1 12.5h6l3-1l5 0.5M5 1l3 2.5h7" fill="none" stroke="#000" stroke-width="0.8"/></g></svg></div>
<div id="view2d"><div class="abs" style="left:310px;top:133px;width:805px;height:903px;background:#ffffff;border-left:2px solid #6c6c6c;border-top:2px solid #6c6c6c;border-right:1px solid #e4e4e4;box-sizing:border-box;"></div><svg width="1920" height="1086" viewBox="0 0 1920 1086" style="left:0;top:0" font-family="Liberation Sans, sans-serif" ><g shape-rendering="crispEdges" stroke="#000" stroke-width="1" fill="none"><path d="M329.5 135V1016.5H1113"/><path d="M324 1012.5H328M326 1004.5H328M326 996.5H328M326 988.5H328M326 980.5H328M324 972.5H328M326 964.5H328M326 956.5H328M326 948.5H328M326 940.5H328M324 932.5H328M326 924.5H328M326 916.5H328M326 908.5H328M326 901.5H328M324 893.5H328M326 885.5H328M326 877.5H328M326 869.5H328M326 861.5H328M324 853.5H328M326 845.5H328M326 837.5H328M326 829.5H328M326 821.5H328M324 813.5H328M326 805.5H328M326 797.5H328M326 790.5H328M326 782.5H328M324 774.5H328M326 766.5H328M326 758.5H328M326 750.5H328M326 742.5H328M324 734.5H328M326 726.5H328M326 718.5H328M326 710.5H328M326 702.5H328M324 694.5H328M326 686.5H328M326 679.5H328M326 671.5H328M326 663.5H328M324 655.5H328M326 647.5H328M326 639.5H328M326 631.5H328M326 623.5H328M324 615.5H328M326 607.5H328M326 599.5H328M326 591.5H328M326 583.5H328M324 576.5H328M326 568.5H328M326 560.5H328M326 552.5H328M326 544.5H328M324 536.5H328M326 528.5H328M326 520.5H328M326 512.5H328M326 504.5H328M324 496.5H328M326 488.5H328M326 480.5H328M326 472.5H328M326 465.5H328M324 457.5H328M326 449.5H328M326 441.5H328M326 433.5H328M326 425.5H328M324 417.5H328M326 409.5H328M326 401.5H328M326 393.5H328M326 385.5H328M324 377.5H328M326 369.5H328M326 361.5H328M326 354.5H328M326 346.5H328M324 338.5H328M326 330.5H328M326 322.5H328M326 314.5H328M326 306.5H328M324 298.5H328M326 290.5H328M326 282.5H328M326 274.5H328M326 266.5H328M324 258.5H328M326 250.5H328M326 243.5H328M326 235.5H328M326 227.5H328M324 219.5H328M326 211.5H328M326 203.5H328M326 195.5H328M326 187.5H328M324 179.5H328M326 171.5H328M326 163.5H328M326 155.5H328M326 147.5H328M324 139.5H328M332.5 1018V1020M339.5 1018V1020M347.5 1018V1020M355.5 1018V1020M363.5 1018V1022M371.5 1018V1020M379.5 1018V1020M387.5 1018V1020M395.5 1018V1020M403.5 1018V1022M411.5 1018V1020M419.5 1018V1020M427.5 1018V1020M435.5 1018V1020M443.5 1018V1022M450.5 1018V1020M458.5 1018V1020M466.5 1018V1020M474.5 1018V1020M482.5 1018V1022M490.5 1018V1020M498.5 1018V1020M506.5 1018V1020M514.5 1018V1020M522.5 1018V1022M530.5 1018V1020M538.5 1018V1020M546.5 1018V1020M554.5 1018V1020M561.5 1018V1022M569.5 1018V1020M577.5 1018V1020M585.5 1018V1020M593.5 1018V1020M601.5 1018V1022M609.5 1018V1020M617.5 1018V1020M625.5 1018V1020M633.5 1018V1020M641.5 1018V1022M649.5 1018V1020M657.5 1018V1020M665.5 1018V1020M672.5 1018V1020M680.5 1018V1022M688.5 1018V1020M696.5 1018V1020M704.5 1018V1020M712.5 1018V1020M720.5 1018V1022M728.5 1018V1020M736.5 1018V1020M744.5 1018V1020M752.5 1018V1020M760.5 1018V1022M768.5 1018V1020M775.5 1018V1020M783.5 1018V1020M791.5 1018V1020M799.5 1018V1022M807.5 1018V1020M815.5 1018V1020M823.5 1018V1020M831.5 1018V1020M839.5 1018V1022M847.5 1018V1020M855.5 1018V1020M863.5 1018V1020M871.5 1018V1020M879.5 1018V1022M886.5 1018V1020M894.5 1018V1020M902.5 1018V1020M910.5 1018V1020M918.5 1018V1022M926.5 1018V1020M934.5 1018V1020M942.5 1018V1020M950.5 1018V1020M958.5 1018V1022M966.5 1018V1020M974.5 1018V1020M982.5 1018V1020M990.5 1018V1020M997.5 1018V1022M1005.5 1018V1020M1013.5 1018V1020M1021.5 1018V1020M1029.5 1018V1020M1037.5 1018V1022M1045.5 1018V1020M1053.5 1018V1020M1061.5 1018V1020M1069.5 1018V1020M1077.5 1018V1022M1085.5 1018V1020M1093.5 1018V1020M1101.5 1018V1020M1108.5 1018V1020"/></g><text transform="translate(321,973.8) rotate(-90)" font-size="10" text-anchor="middle" fill="#000">-100</text><text transform="translate(321,894.5) rotate(-90)" font-size="10" text-anchor="middle" fill="#000">-80</text><text transform="translate(321,815.2) rotate(-90)" font-size="10" text-anchor="middle" fill="#000">-60</text><text transform="translate(321,736.0) rotate(-90)" font-size="10" text-anchor="middle" fill="#000">-40</text><text transform="translate(321,656.7) rotate(-90)" font-size="10" text-anchor="middle" fill="#000">-20</text><text transform="translate(321,576.0) rotate(-90)" font-size="10" text-anchor="middle" fill="#000">0</text><text transform="translate(321,496.7) rotate(-90)" font-size="10" text-anchor="middle" fill="#000">20</text><text transform="translate(321,417.4) rotate(-90)" font-size="10" text-anchor="middle" fill="#000">40</text><text transform="translate(321,338.2) rotate(-90)" font-size="10" text-anchor="middle" fill="#000">60</text><text transform="translate(321,258.9) rotate(-90)" font-size="10" text-anchor="middle" fill="#000">80</text><text transform="translate(321,179.6) rotate(-90)" font-size="10" text-anchor="middle" fill="#000">100</text><text x="402.0" y="1030.8" font-size="10" text-anchor="middle" fill="#000">-80</text><text x="481.3" y="1030.8" font-size="10" text-anchor="middle" fill="#000">-60</text><text x="560.5" y="1030.8" font-size="10" text-anchor="middle" fill="#000">-40</text><text x="639.8" y="1030.8" font-size="10" text-anchor="middle" fill="#000">-20</text><text x="720.5" y="1030.8" font-size="10" text-anchor="middle" fill="#000">0</text><text x="799.8" y="1030.8" font-size="10" text-anchor="middle" fill="#000">20</text><text x="879.1" y="1030.8" font-size="10" text-anchor="middle" fill="#000">40</text><text x="958.3" y="1030.8" font-size="10" text-anchor="middle" fill="#000">60</text><text x="1037.6" y="1030.8" font-size="10" text-anchor="middle" fill="#000">80</text><rect x="443" y="180" width="555" height="793" fill="#3a205e"/><g id="contours"><polygon points="720.5,329.0 774.0,332.5 790.0,334.0 804.5,340.0 811.4,348.0 814.0,355.0 817.5,361.0 834.0,378.0 839.0,398.0 841.5,427.0 841.5,729.0 839.0,770.0 834.0,788.0 813.0,802.0 812.0,815.0 776.0,818.6 720.5,823.7 665.0,818.6 629.0,815.0 628.0,802.0 607.0,788.0 602.0,770.0 599.5,729.0 599.5,427.0 602.0,398.0 607.0,378.0 623.5,361.0 627.0,355.0 629.6,348.0 636.5,340.0 651.0,334.0 667.0,332.5" fill="#4a2f82"/><polygon points="628.3,369.9 634.9,368.7 641.5,366.7 648.1,364.4 654.6,362.0 661.2,359.5 667.8,357.2 674.4,354.9 681.0,352.9 687.6,351.1 694.2,349.6 700.7,348.4 707.3,347.6 713.9,347.0 720.5,346.9 727.1,347.0 733.7,347.6 740.3,348.4 746.8,349.6 753.4,351.1 760.0,352.9 766.6,354.9 773.2,357.2 779.8,359.5 786.4,362.0 792.9,364.4 799.5,366.7 806.1,368.7 812.7,369.9 812.7,782.1 806.1,783.3 799.5,785.3 792.9,787.6 786.4,790.0 779.8,792.5 773.2,794.8 766.6,797.1 760.0,799.1 753.4,800.9 746.8,802.4 740.3,803.6 733.7,804.4 727.1,805.0 720.5,805.1 713.9,805.0 707.3,804.4 700.7,803.6 694.2,802.4 687.6,800.9 681.0,799.1 674.4,797.1 667.8,794.8 661.2,792.5 654.6,790.0 648.1,787.6 641.5,785.3 634.9,783.3 628.3,782.1" fill="#563ea0"/><polygon points="629.3,369.9 635.8,369.1 642.3,367.9 648.8,366.4 655.4,364.9 661.9,363.4 668.4,361.9 674.9,360.5 681.4,359.2 687.9,358.1 694.4,357.1 701.0,356.4 707.5,355.8 714.0,355.5 720.5,355.4 727.0,355.5 733.5,355.8 740.0,356.4 746.6,357.1 753.1,358.1 759.6,359.2 766.1,360.5 772.6,361.9 779.1,363.4 785.6,364.9 792.2,366.4 798.7,367.9 805.2,369.1 811.7,369.9 811.7,782.1 805.2,782.9 798.7,784.1 792.2,785.6 785.6,787.1 779.1,788.6 772.6,790.1 766.1,791.5 759.6,792.8 753.1,793.9 746.6,794.9 740.0,795.6 733.5,796.2 727.0,796.5 720.5,796.6 714.0,796.5 707.5,796.2 701.0,795.6 694.4,794.9 687.9,793.9 681.4,792.8 674.9,791.5 668.4,790.1 661.9,788.6 655.4,787.1 648.8,785.6 642.3,784.1 635.8,782.9 629.3,782.1" fill="#5648b5"/><polygon points="630.1,369.9 636.5,369.3 643.0,368.4 649.5,367.3 655.9,366.1 662.4,364.9 668.8,363.8 675.3,362.7 681.8,361.8 688.2,360.9 694.7,360.2 701.1,359.6 707.6,359.2 714.0,359.0 720.5,358.9 727.0,359.0 733.4,359.2 739.9,359.6 746.3,360.2 752.8,360.9 759.2,361.8 765.7,362.7 772.2,363.8 778.6,364.9 785.1,366.1 791.5,367.3 798.0,368.4 804.5,369.3 810.9,369.9 810.9,782.1 804.5,782.7 798.0,783.6 791.5,784.7 785.1,785.9 778.6,787.1 772.2,788.2 765.7,789.3 759.2,790.2 752.8,791.1 746.3,791.8 739.9,792.4 733.4,792.8 727.0,793.0 720.5,793.1 714.0,793.0 707.6,792.8 701.1,792.4 694.7,791.8 688.2,791.1 681.8,790.2 675.3,789.3 668.8,788.2 662.4,787.1 655.9,785.9 649.5,784.7 643.0,783.6 636.5,782.7 630.1,782.1" fill="#5256c8"/><polygon points="630.9,369.9 637.3,369.5 643.7,368.8 650.1,368.0 656.5,367.1 662.9,366.3 669.3,365.5 675.7,364.7 682.1,364.0 688.5,363.4 694.9,362.8 701.3,362.4 707.7,362.1 714.1,361.9 720.5,361.9 726.9,361.9 733.3,362.1 739.7,362.4 746.1,362.8 752.5,363.4 758.9,364.0 765.3,364.7 771.7,365.5 778.1,366.3 784.5,367.1 790.9,368.0 797.3,368.8 803.7,369.5 810.1,369.9 810.1,782.1 803.7,782.5 797.3,783.2 790.9,784.0 784.5,784.9 778.1,785.7 771.7,786.5 765.3,787.3 758.9,788.0 752.5,788.6 746.1,789.2 739.7,789.6 733.3,789.9 726.9,790.1 720.5,790.1 714.1,790.1 707.7,789.9 701.3,789.6 694.9,789.2 688.5,788.6 682.1,788.0 675.7,787.3 669.3,786.5 662.9,785.7 656.5,784.9 650.1,784.0 643.7,783.2 637.3,782.5 630.9,782.1" fill="#4a66dc"/><polygon points="631.7,369.9 638.0,369.6 644.4,369.1 650.7,368.6 657.1,368.0 663.4,367.4 669.8,366.8 676.1,366.3 682.4,365.8 688.8,365.4 695.1,365.0 701.5,364.7 707.8,364.5 714.2,364.4 720.5,364.4 726.8,364.4 733.2,364.5 739.5,364.7 745.9,365.0 752.2,365.4 758.6,365.8 764.9,366.3 771.2,366.8 777.6,367.4 783.9,368.0 790.3,368.6 796.6,369.1 803.0,369.6 809.3,369.9 809.3,782.1 803.0,782.4 796.6,782.9 790.3,783.4 783.9,784.0 777.6,784.6 771.2,785.2 764.9,785.7 758.6,786.2 752.2,786.6 745.9,787.0 739.5,787.3 733.2,787.5 726.8,787.6 720.5,787.6 714.2,787.6 707.8,787.5 701.5,787.3 695.1,787.0 688.8,786.6 682.4,786.2 676.1,785.7 669.8,785.2 663.4,784.6 657.1,784.0 650.7,783.4 644.4,782.9 638.0,782.4 631.7,782.1" fill="#4076ec"/><polygon points="632.5,369.9 638.8,369.7 645.1,369.5 651.4,369.2 657.6,368.8 663.9,368.5 670.2,368.2 676.5,367.9 682.8,367.7 689.1,367.4 695.4,367.2 701.6,367.1 707.9,367.0 714.2,366.9 720.5,366.9 726.8,366.9 733.1,367.0 739.4,367.1 745.6,367.2 751.9,367.4 758.2,367.7 764.5,367.9 770.8,368.2 777.1,368.5 783.4,368.8 789.6,369.2 795.9,369.5 802.2,369.7 808.5,369.9 808.5,782.1 802.2,782.3 795.9,782.5 789.6,782.8 783.4,783.2 777.1,783.5 770.8,783.8 764.5,784.1 758.2,784.3 751.9,784.6 745.6,784.8 739.4,784.9 733.1,785.0 726.8,785.1 720.5,785.1 714.2,785.1 707.9,785.0 701.6,784.9 695.4,784.8 689.1,784.6 682.8,784.3 676.5,784.1 670.2,783.8 663.9,783.5 657.6,783.2 651.4,782.8 645.1,782.5 638.8,782.3 632.5,782.1" fill="#3586f4"/><polygon points="806.3,370.3 806.7,370.4 807.0,370.6 807.1,371.0 807.1,781.0 807.0,781.4 806.7,781.6 806.3,781.7 634.7,781.7 634.3,781.6 634.0,781.4 633.9,781.0 633.9,371.0 634.0,370.6 634.3,370.4 634.7,370.3" fill="#3b7df0"/><polygon points="805.3,370.7 805.8,370.9 806.2,371.2 806.3,371.8 806.3,780.2 806.2,780.8 805.8,781.1 805.3,781.3 635.7,781.3 635.2,781.1 634.8,780.8 634.7,780.2 634.7,371.8 634.8,371.2 635.2,370.9 635.7,370.7" fill="#3389f3"/><polygon points="804.3,371.2 805.0,371.4 805.5,371.9 805.6,372.5 805.6,779.5 805.5,780.1 805.0,780.6 804.3,780.8 636.7,780.8 636.0,780.6 635.5,780.1 635.4,779.5 635.4,372.5 635.5,371.9 636.0,371.4 636.7,371.2" fill="#2a96ef"/><polygon points="803.7,371.7 804.5,371.9 805.1,372.5 805.3,373.3 805.3,778.7 805.1,779.5 804.5,780.1 803.7,780.3 637.3,780.3 636.5,780.1 635.9,779.5 635.7,778.7 635.7,373.3 635.9,372.5 636.5,371.9 637.3,371.7" fill="#26a1eb"/><polygon points="803.0,372.1 804.0,372.4 804.6,373.1 804.9,374.0 804.9,778.0 804.6,778.9 804.0,779.6 803.0,779.9 638.0,779.9 637.0,779.6 636.4,778.9 636.1,778.0 636.1,374.0 636.4,373.1 637.0,372.4 638.0,372.1" fill="#23ace5"/><polygon points="802.4,372.6 803.5,372.9 804.2,373.6 804.5,374.7 804.5,777.3 804.2,778.4 803.5,779.1 802.4,779.4 638.6,779.4 637.5,779.1 636.8,778.4 636.5,777.3 636.5,374.7 636.8,373.6 637.5,372.9 638.6,372.6" fill="#20b7de"/><polygon points="801.8,373.0 803.0,373.3 803.8,374.2 804.1,375.3 804.1,776.7 803.8,777.8 803.0,778.7 801.8,779.0 639.2,779.0 638.0,778.7 637.2,777.8 636.9,776.7 636.9,375.3 637.2,374.2 638.0,373.3 639.2,373.0" fill="#20c2d5"/><polygon points="801.2,373.4 802.5,373.7 803.4,374.7 803.8,376.0 803.8,776.0 803.4,777.3 802.5,778.3 801.2,778.6 639.8,778.6 638.5,778.3 637.6,777.3 637.2,776.0 637.2,376.0 637.6,374.7 638.5,373.7 639.8,373.4" fill="#22cbca"/><polygon points="800.2,373.8 801.6,374.2 802.7,375.2 803.1,376.6 803.1,775.4 802.7,776.8 801.6,777.8 800.2,778.2 640.8,778.2 639.4,777.8 638.3,776.8 637.9,775.4 637.9,376.6 638.3,375.2 639.4,374.2 640.8,373.8" fill="#26d4be"/><polygon points="799.2,374.2 800.7,374.6 801.9,375.7 802.3,377.3 802.3,774.7 801.9,776.3 800.7,777.4 799.2,777.8 641.8,777.8 640.3,777.4 639.1,776.3 638.7,774.7 638.7,377.3 639.1,375.7 640.3,374.6 641.8,374.2" fill="#2cdcb0"/><polygon points="798.2,374.6 799.8,375.0 801.1,376.2 801.5,377.9 801.5,774.1 801.1,775.8 799.8,777.0 798.2,777.4 642.8,777.4 641.2,777.0 639.9,775.8 639.5,774.1 639.5,377.9 639.9,376.2 641.2,375.0 642.8,374.6" fill="#34e3a2"/><polygon points="797.1,375.1 798.9,375.5 800.2,376.9 800.7,378.7 800.7,773.3 800.2,775.1 798.9,776.5 797.1,776.9 643.9,776.9 642.1,776.5 640.8,775.1 640.3,773.3 640.3,378.7 640.8,376.9 642.1,375.5 643.9,375.1" fill="#3ee992"/><polygon points="795.8,375.8 797.8,376.3 799.3,377.8 799.8,379.9 799.8,772.1 799.3,774.2 797.8,775.7 795.8,776.2 645.2,776.2 643.2,775.7 641.7,774.2 641.2,772.1 641.2,379.9 641.7,377.8 643.2,376.3 645.2,375.8" fill="#4aef82"/><polygon points="794.3,376.6 796.6,377.2 798.2,378.8 798.8,381.1 798.8,770.9 798.2,773.2 796.6,774.8 794.3,775.4 646.7,775.4 644.4,774.8 642.8,773.2 642.2,770.9 642.2,381.1 642.8,378.8 644.4,377.2 646.7,376.6" fill="#5bf471"/><polygon points="792.9,377.3 795.4,378.0 797.2,379.8 797.8,382.3 797.8,769.7 797.2,772.2 795.4,774.0 792.9,774.7 648.1,774.7 645.6,774.0 643.8,772.2 643.2,769.7 643.2,382.3 643.8,379.8 645.6,378.0 648.1,377.3" fill="#6cf862"/><polygon points="791.4,378.0 794.1,378.8 796.1,380.7 796.8,383.4 796.8,768.6 796.1,771.3 794.1,773.2 791.4,774.0 649.6,774.0 646.9,773.2 644.9,771.3 644.2,768.6 644.2,383.4 644.9,380.7 646.9,378.8 649.6,378.0" fill="#7dfa56"/><polygon points="790.0,378.8 792.9,379.6 795.0,381.7 795.8,384.6 795.8,767.4 795.0,770.3 792.9,772.4 790.0,773.2 651.0,773.2 648.1,772.4 646.0,770.3 645.2,767.4 645.2,384.6 646.0,381.7 648.1,379.6 651.0,378.8" fill="#8efc4d"/><polygon points="788.1,379.5 791.3,380.4 793.6,382.7 794.4,385.8 794.4,766.2 793.6,769.3 791.3,771.6 788.1,772.5 652.9,772.5 649.7,771.6 647.4,769.3 646.6,766.2 646.6,385.8 647.4,382.7 649.7,380.4 652.9,379.5" fill="#9efa45"/><polygon points="786.2,380.3 789.6,381.2 792.0,383.7 793.0,387.0 793.0,765.0 792.0,768.3 789.6,770.8 786.2,771.7 654.8,771.7 651.4,770.8 649.0,768.3 648.0,765.0 648.0,387.0 649.0,383.7 651.4,381.2 654.8,380.3" fill="#aff63e"/><polygon points="784.3,381.1 787.9,382.1 790.5,384.7 791.5,388.4 791.5,763.6 790.5,767.3 787.9,769.9 784.3,770.9 656.7,770.9 653.1,769.9 650.5,767.3 649.5,763.6 649.5,388.4 650.5,384.7 653.1,382.1 656.7,381.1" fill="#c0f03a"/><polygon points="782.1,382.2 786.1,383.3 789.0,386.2 790.0,390.1 790.0,761.9 789.0,765.8 786.1,768.7 782.1,769.8 658.9,769.8 654.9,768.7 652.0,765.8 651.0,761.9 651.0,390.1 652.0,386.2 654.9,383.3 658.9,382.2" fill="#d1e937"/><polygon points="779.9,383.4 784.2,384.5 787.4,387.6 788.5,391.9 788.5,760.1 787.4,764.4 784.2,767.5 779.9,768.6 661.1,768.6 656.8,767.5 653.6,764.4 652.5,760.1 652.5,391.9 653.6,387.6 656.8,384.5 661.1,383.4" fill="#e0e035"/><polygon points="777.7,384.5 782.3,385.7 785.7,389.1 787.0,393.7 787.0,758.3 785.7,762.9 782.3,766.3 777.7,767.5 663.3,767.5 658.7,766.3 655.3,762.9 654.0,758.3 654.0,393.7 655.3,389.1 658.7,385.7 663.3,384.5" fill="#edd633"/><polygon points="775.5,385.6 780.4,386.9 784.1,390.6 785.4,395.5 785.4,756.5 784.1,761.4 780.4,765.1 775.5,766.4 665.5,766.4 660.6,765.1 656.9,761.4 655.6,756.5 655.6,395.5 656.9,390.6 660.6,386.9 665.5,385.6" fill="#f7cb2f"/><polygon points="773.2,386.7 778.5,388.1 782.4,392.0 783.8,397.3 783.8,754.7 782.4,760.0 778.5,763.9 773.2,765.3 667.8,765.3 662.5,763.9 658.6,760.0 657.2,754.7 657.2,397.3 658.6,392.0 662.5,388.1 667.8,386.7" fill="#fcbf2c"/><polygon points="771.1,387.6 776.7,389.1 780.8,393.2 782.3,398.8 782.3,753.2 780.8,758.8 776.7,762.9 771.1,764.4 669.9,764.4 664.3,762.9 660.2,758.8 658.7,753.2 658.7,398.8 660.2,393.2 664.3,389.1 669.9,387.6" fill="#ffb22a"/><polygon points="768.5,388.5 774.3,390.1 778.6,394.4 780.2,400.2 780.2,751.8 778.6,757.6 774.3,761.9 768.5,763.5 672.5,763.5 666.7,761.9 662.4,757.6 660.8,751.8 660.8,400.2 662.4,394.4 666.7,390.1 672.5,388.5" fill="#ffa428"/><polygon points="765.9,389.4 772.0,391.0 776.4,395.5 778.1,401.6 778.1,750.4 776.4,756.5 772.0,761.0 765.9,762.6 675.1,762.6 669.0,761.0 664.6,756.5 662.9,750.4 662.9,401.6 664.6,395.5 669.0,391.0 675.1,389.4" fill="#ff9827"/><polygon points="763.2,390.3 769.6,392.0 774.3,396.7 776.0,403.0 776.0,749.0 774.3,755.3 769.6,760.0 763.2,761.7 677.8,761.7 671.4,760.0 666.7,755.3 665.0,749.0 665.0,403.0 666.7,396.7 671.4,392.0 677.8,390.3" fill="#ff8d25"/><polygon points="760.7,391.2 767.3,392.9 772.2,397.8 773.9,404.4 773.9,747.6 772.2,754.2 767.3,759.1 760.7,760.8 680.3,760.8 673.7,759.1 668.8,754.2 667.1,747.6 667.1,404.4 668.8,397.8 673.7,392.9 680.3,391.2" fill="#ff8024"/><polygon points="758.1,392.1 765.1,393.9 770.1,399.0 772.0,405.9 772.0,746.1 770.1,753.0 765.1,758.1 758.1,759.9 682.9,759.9 675.9,758.1 670.9,753.0 669.0,746.1 669.0,405.9 670.9,399.0 675.9,393.9 682.9,392.1" fill="#fe7221"/><polygon points="755.6,393.0 762.8,395.0 768.0,400.2 770.0,407.4 770.0,744.6 768.0,751.8 762.8,757.0 755.6,759.0 685.4,759.0 678.2,757.0 673.0,751.8 671.0,744.6 671.0,407.4 673.0,400.2 678.2,395.0 685.4,393.0" fill="#fc651e"/><polygon points="752.1,395.4 760.0,397.6 765.8,403.4 767.9,411.3 767.9,740.7 765.8,748.6 760.0,754.4 752.1,756.6 688.9,756.6 681.0,754.4 675.2,748.6 673.1,740.7 673.1,411.3 675.2,403.4 681.0,397.6 688.9,395.4" fill="#f9581b"/><polygon points="748.5,397.8 757.1,400.2 763.4,406.5 765.8,415.1 765.8,736.9 763.4,745.5 757.1,751.8 748.5,754.2 692.5,754.2 683.9,751.8 677.6,745.5 675.2,736.9 675.2,415.1 677.6,406.5 683.9,400.2 692.5,397.8" fill="#f24d17"/><polygon points="744.5,400.8 754.0,403.3 761.0,410.3 763.6,419.8 763.6,732.2 761.0,741.7 754.0,748.7 744.5,751.2 696.5,751.2 687.0,748.7 680.0,741.7 677.4,732.2 677.4,419.8 680.0,410.3 687.0,403.3 696.5,400.8" fill="#e94213"/><polygon points="740.3,404.2 750.8,407.0 758.5,414.7 761.3,425.2 761.3,726.8 758.5,737.3 750.8,745.0 740.3,747.8 700.7,747.8 690.2,745.0 682.5,737.3 679.7,726.8 679.7,425.2 682.5,414.7 690.2,407.0 700.7,404.2" fill="#df370e"/><polygon points="735.1,408.5 746.9,411.7 755.6,420.4 758.8,432.2 758.8,719.8 755.6,731.6 746.9,740.3 735.1,743.5 705.9,743.5 694.1,740.3 685.4,731.6 682.2,719.8 682.2,432.2 685.4,420.4 694.1,411.7 705.9,408.5" fill="#d42d09"/><polygon points="726.9,417.9 741.5,421.8 752.2,432.5 756.2,447.2 756.2,704.8 752.2,719.5 741.5,730.2 726.9,734.1 714.1,734.1 699.5,730.2 688.8,719.5 684.8,704.8 684.8,447.2 688.8,432.5 699.5,421.8 714.1,417.9" fill="#c72506"/><polygon points="720.5,427.9 736.8,432.3 748.7,444.5 753.0,461.2 753.0,690.8 748.7,707.5 736.8,719.7 720.5,724.1 720.5,724.1 704.2,719.7 692.3,707.5 688.0,690.8 688.0,461.2 692.3,444.5 704.2,432.3 720.5,427.9" fill="#ba1d03"/><polygon points="720.5,439.1 735.1,443.8 745.8,456.7 749.8,474.3 749.8,677.7 745.8,695.3 735.1,708.2 720.5,712.9 720.5,712.9 705.9,708.2 695.2,695.3 691.2,677.7 691.2,474.3 695.2,456.7 705.9,443.8 720.5,439.1" fill="#ac1602"/><polygon points="720.5,453.3 732.0,458.5 740.4,472.8 743.5,492.3 743.5,659.7 740.4,679.2 732.0,693.5 720.5,698.7 720.5,698.7 709.0,693.5 700.6,679.2 697.5,659.7 697.5,492.3 700.6,472.8 709.0,458.5 720.5,453.3" fill="#9e0f01"/><polygon points="720.5,477.3 726.7,483.4 731.3,500.0 732.9,522.7 732.9,629.3 731.3,652.0 726.7,668.6 720.5,674.7 720.5,674.7 714.3,668.6 709.7,652.0 708.1,629.3 708.1,522.7 709.7,500.0 714.3,483.4 720.5,477.3" fill="#920a00"/></g><rect x="442.5" y="179.5" width="556" height="794" fill="none" stroke="#8c8c8c" stroke-width="1" stroke-dasharray="7 3 2 3" shape-rendering="crispEdges"/><circle cx="442.5" cy="179.5" r="2.3" fill="#fff" stroke="#000" stroke-width="1"/><circle cx="998.5" cy="179.5" r="2.3" fill="#fff" stroke="#000" stroke-width="1"/><circle cx="998.5" cy="973.5" r="2.3" fill="#fff" stroke="#000" stroke-width="1"/><circle cx="442.5" cy="973.5" r="2.3" fill="#fff" stroke="#000" stroke-width="1"/><rect x="806.5" y="367.5" width="3" height="3" fill="#fff" stroke="#000" stroke-width="1" shape-rendering="crispEdges"/><rect x="633" y="370" width="174" height="412" fill="none" stroke="#0000ff" stroke-width="2" shape-rendering="crispEdges"/><g shape-rendering="crispEdges" fill="none"><path d="M635 372H809M632 378H806M635 384H809M632 390H806M635 396H809M632 402H806M635 408H809M632 414H806M635 420H809M632 425H806M635 431H809M632 437H806M635 443H809M632 449H806M635 455H809M632 461H806M635 467H809M632 473H806M635 479H809M632 485H806M635 491H809M632 497H806M635 503H809M632 509H806M635 515H809M632 520H806M635 526H809M632 532H806M635 538H809M632 544H806M635 550H809M632 556H806M635 562H809M632 568H806M635 574H809M632 580H806M635 586H809M632 592H806M635 598H809M632 604H806M635 610H809M632 616H806M635 621H809M632 627H806M635 633H809M632 639H806M635 645H809M632 651H806M635 657H809M632 663H806M635 669H809M632 675H806M635 681H809M632 687H806M635 693H809M632 699H806M635 705H809M632 711H806M635 717H809M632 722H806M635 728H809M632 734H806M635 740H809M632 746H806M635 752H809M632 758H806M635 764H809M632 770H806M635 776H809" stroke="#0000ff" stroke-width="4"/><path d="M636 372h5M642 372h5M648 372h5M654 372h5M660 372h5M666 372h5M672 372h5M678 372h5M684 372h5M690 372h5M696 372h5M702 372h4M707 372h5M713 372h5M719 372h5M725 372h5M731 372h5M737 372h5M743 372h5M749 372h5M755 372h5M761 372h5M767 372h5M773 372h5M779 372h5M785 372h5M791 372h5M797 372h5M803 372h5M633 378h5M639 378h5M645 378h5M651 378h5M657 378h5M663 378h5M669 378h5M675 378h5M681 378h5M687 378h5M693 378h5M699 378h4M704 378h5M710 378h5M716 378h5M722 378h5M728 378h5M734 378h5M740 378h5M746 378h5M752 378h5M758 378h5M764 378h5M770 378h5M776 378h5M782 378h5M788 378h5M794 378h5M800 378h5M636 384h5M642 384h5M648 384h5M654 384h5M660 384h5M666 384h5M672 384h5M678 384h5M684 384h5M690 384h5M696 384h5M702 384h4M707 384h5M713 384h5M719 384h5M725 384h5M731 384h5M737 384h5M743 384h5M749 384h5M755 384h5M761 384h5M767 384h5M773 384h5M779 384h5M785 384h5M791 384h5M797 384h5M803 384h5M633 390h5M639 390h5M645 390h5M651 390h5M657 390h5M663 390h5M669 390h5M675 390h5M681 390h5M687 390h5M693 390h5M699 390h4M704 390h5M710 390h5M716 390h5M722 390h5M728 390h5M734 390h5M740 390h5M746 390h5M752 390h5M758 390h5M764 390h5M770 390h5M776 390h5M782 390h5M788 390h5M794 390h5M800 390h5M636 396h5M642 396h5M648 396h5M654 396h5M660 396h5M666 396h5M672 396h5M678 396h5M684 396h5M690 396h5M696 396h5M702 396h4M707 396h5M713 396h5M719 396h5M725 396h5M731 396h5M737 396h5M743 396h5M749 396h5M755 396h5M761 396h5M767 396h5M773 396h5M779 396h5M785 396h5M791 396h5M797 396h5M803 396h5M633 402h5M639 402h5M645 402h5M651 402h5M657 402h5M663 402h5M669 402h5M675 402h5M681 402h5M687 402h5M693 402h5M699 402h4M704 402h5M710 402h5M716 402h5M722 402h5M728 402h5M734 402h5M740 402h5M746 402h5M752 402h5M758 402h5M764 402h5M770 402h5M776 402h5M782 402h5M788 402h5M794 402h5M800 402h5M636 408h5M642 408h5M648 408h5M654 408h5M660 408h5M666 408h5M672 408h5M678 408h5M684 408h5M690 408h5M696 408h5M702 408h4M707 408h5M713 408h5M719 408h5M725 408h5M731 408h5M737 408h5M743 408h5M749 408h5M755 408h5M761 408h5M767 408h5M773 408h5M779 408h5M785 408h5M791 408h5M797 408h5M803 408h5M633 414h5M639 414h5M645 414h5M651 414h5M657 414h5M663 414h5M669 414h5M675 414h5M681 414h5M687 414h5M693 414h5M699 414h4M704 414h5M710 414h5M716 414h5M722 414h5M728 414h5M734 414h5M740 414h5M746 414h5M752 414h5M758 414h5M764 414h5M770 414h5M776 414h5M782 414h5M788 414h5M794 414h5M800 414h5M636 420h5M642 420h5M648 420h5M654 420h5M660 420h5M666 420h5M672 420h5M678 420h5M684 420h5M690 420h5M696 420h5M702 420h4M707 420h5M713 420h5M719 420h5M725 420h5M731 420h5M737 420h5M743 420h5M749 420h5M755 420h5M761 420h5M767 420h5M773 420h5M779 420h5M785 420h5M791 420h5M797 420h5M803 420h5M633 425h5M639 425h5M645 425h5M651 425h5M657 425h5M663 425h5M669 425h5M675 425h5M681 425h5M687 425h5M693 425h5M699 425h4M704 425h5M710 425h5M716 425h5M722 425h5M728 425h5M734 425h5M740 425h5M746 425h5M752 425h5M758 425h5M764 425h5M770 425h5M776 425h5M782 425h5M788 425h5M794 425h5M800 425h5M636 431h5M642 431h5M648 431h5M654 431h5M660 431h5M666 431h5M672 431h5M678 431h5M684 431h5M690 431h5M696 431h5M702 431h4M707 431h5M713 431h5M719 431h5M725 431h5M731 431h5M737 431h5M743 431h5M749 431h5M755 431h5M761 431h5M767 431h5M773 431h5M779 431h5M785 431h5M791 431h5M797 431h5M803 431h5M633 437h5M639 437h5M645 437h5M651 437h5M657 437h5M663 437h5M669 437h5M675 437h5M681 437h5M687 437h5M693 437h5M699 437h4M704 437h5M710 437h5M716 437h5M722 437h5M728 437h5M734 437h5M740 437h5M746 437h5M752 437h5M758 437h5M764 437h5M770 437h5M776 437h5M782 437h5M788 437h5M794 437h5M800 437h5M636 443h5M642 443h5M648 443h5M654 443h5M660 443h5M666 443h5M672 443h5M678 443h5M684 443h5M690 443h5M696 443h5M702 443h4M707 443h5M713 443h5M719 443h5M725 443h5M731 443h5M737 443h5M743 443h5M749 443h5M755 443h5M761 443h5M767 443h5M773 443h5M779 443h5M785 443h5M791 443h5M797 443h5M803 443h5M633 449h5M639 449h5M645 449h5M651 449h5M657 449h5M663 449h5M669 449h5M675 449h5M681 449h5M687 449h5M693 449h5M699 449h4M704 449h5M710 449h5M716 449h5M722 449h5M728 449h5M734 449h5M740 449h5M746 449h5M752 449h5M758 449h5M764 449h5M770 449h5M776 449h5M782 449h5M788 449h5M794 449h5M800 449h5M636 455h5M642 455h5M648 455h5M654 455h5M660 455h5M666 455h5M672 455h5M678 455h5M684 455h5M690 455h5M696 455h5M702 455h4M707 455h5M713 455h5M719 455h5M725 455h5M731 455h5M737 455h5M743 455h5M749 455h5M755 455h5M761 455h5M767 455h5M773 455h5M779 455h5M785 455h5M791 455h5M797 455h5M803 455h5M633 461h5M639 461h5M645 461h5M651 461h5M657 461h5M663 461h5M669 461h5M675 461h5M681 461h5M687 461h5M693 461h5M699 461h4M704 461h5M710 461h5M716 461h5M722 461h5M728 461h5M734 461h5M740 461h5M746 461h5M752 461h5M758 461h5M764 461h5M770 461h5M776 461h5M782 461h5M788 461h5M794 461h5M800 461h5M636 467h5M642 467h5M648 467h5M654 467h5M660 467h5M666 467h5M672 467h5M678 467h5M684 467h5M690 467h5M696 467h5M702 467h4M707 467h5M713 467h5M719 467h5M725 467h5M731 467h5M737 467h5M743 467h5M749 467h5M755 467h5M761 467h5M767 467h5M773 467h5M779 467h5M785 467h5M791 467h5M797 467h5M803 467h5M633 473h5M639 473h5M645 473h5M651 473h5M657 473h5M663 473h5M669 473h5M675 473h5M681 473h5M687 473h5M693 473h5M699 473h4M704 473h5M710 473h5M716 473h5M722 473h5M728 473h5M734 473h5M740 473h5M746 473h5M752 473h5M758 473h5M764 473h5M770 473h5M776 473h5M782 473h5M788 473h5M794 473h5M800 473h5M636 479h5M642 479h5M648 479h5M654 479h5M660 479h5M666 479h5M672 479h5M678 479h5M684 479h5M690 479h5M696 479h5M702 479h4M707 479h5M713 479h5M719 479h5M725 479h5M731 479h5M737 479h5M743 479h5M749 479h5M755 479h5M761 479h5M767 479h5M773 479h5M779 479h5M785 479h5M791 479h5M797 479h5M803 479h5M633 485h5M639 485h5M645 485h5M651 485h5M657 485h5M663 485h5M669 485h5M675 485h5M681 485h5M687 485h5M693 485h5M699 485h4M704 485h5M710 485h5M716 485h5M722 485h5M728 485h5M734 485h5M740 485h5M746 485h5M752 485h5M758 485h5M764 485h5M770 485h5M776 485h5M782 485h5M788 485h5M794 485h5M800 485h5M636 491h5M642 491h5M648 491h5M654 491h5M660 491h5M666 491h5M672 491h5M678 491h5M684 491h5M690 491h5M696 491h5M702 491h4M707 491h5M713 491h5M719 491h5M725 491h5M731 491h5M737 491h5M743 491h5M749 491h5M755 491h5M761 491h5M767 491h5M773 491h5M779 491h5M785 491h5M791 491h5M797 491h5M803 491h5M633 497h5M639 497h5M645 497h5M651 497h5M657 497h5M663 497h5M669 497h5M675 497h5M681 497h5M687 497h5M693 497h5M699 497h4M704 497h5M710 497h5M716 497h5M722 497h5M728 497h5M734 497h5M740 497h5M746 497h5M752 497h5M758 497h5M764 497h5M770 497h5M776 497h5M782 497h5M788 497h5M794 497h5M800 497h5M636 503h5M642 503h5M648 503h5M654 503h5M660 503h5M666 503h5M672 503h5M678 503h5M684 503h5M690 503h5M696 503h5M702 503h4M707 503h5M713 503h5M719 503h5M725 503h5M731 503h5M737 503h5M743 503h5M749 503h5M755 503h5M761 503h5M767 503h5M773 503h5M779 503h5M785 503h5M791 503h5M797 503h5M803 503h5M633 509h5M639 509h5M645 509h5M651 509h5M657 509h5M663 509h5M669 509h5M675 509h5M681 509h5M687 509h5M693 509h5M699 509h4M704 509h5M710 509h5M716 509h5M722 509h5M728 509h5M734 509h5M740 509h5M746 509h5M752 509h5M758 509h5M764 509h5M770 509h5M776 509h5M782 509h5M788 509h5M794 509h5M800 509h5M636 515h5M642 515h5M648 515h5M654 515h5M660 515h5M666 515h5M672 515h5M678 515h5M684 515h5M690 515h5M696 515h5M702 515h4M707 515h5M713 515h5M719 515h5M725 515h5M731 515h5M737 515h5M743 515h5M749 515h5M755 515h5M761 515h5M767 515h5M773 515h5M779 515h5M785 515h5M791 515h5M797 515h5M803 515h5M633 520h5M639 520h5M645 520h5M651 520h5M657 520h5M663 520h5M669 520h5M675 520h5M681 520h5M687 520h5M693 520h5M699 520h4M704 520h5M710 520h5M716 520h5M722 520h5M728 520h5M734 520h5M740 520h5M746 520h5M752 520h5M758 520h5M764 520h5M770 520h5M776 520h5M782 520h5M788 520h5M794 520h5M800 520h5M636 526h5M642 526h5M648 526h5M654 526h5M660 526h5M666 526h5M672 526h5M678 526h5M684 526h5M690 526h5M696 526h5M702 526h4M707 526h5M713 526h5M719 526h5M725 526h5M731 526h5M737 526h5M743 526h5M749 526h5M755 526h5M761 526h5M767 526h5M773 526h5M779 526h5M785 526h5M791 526h5M797 526h5M803 526h5M633 532h5M639 532h5M645 532h5M651 532h5M657 532h5M663 532h5M669 532h5M675 532h5M681 532h5M687 532h5M693 532h5M699 532h4M704 532h5M710 532h5M716 532h5M722 532h5M728 532h5M734 532h5M740 532h5M746 532h5M752 532h5M758 532h5M764 532h5M770 532h5M776 532h5M782 532h5M788 532h5M794 532h5M800 532h5M636 538h5M642 538h5M648 538h5M654 538h5M660 538h5M666 538h5M672 538h5M678 538h5M684 538h5M690 538h5M696 538h5M702 538h4M707 538h5M713 538h5M719 538h5M725 538h5M731 538h5M737 538h5M743 538h5M749 538h5M755 538h5M761 538h5M767 538h5M773 538h5M779 538h5M785 538h5M791 538h5M797 538h5M803 538h5M633 544h5M639 544h5M645 544h5M651 544h5M657 544h5M663 544h5M669 544h5M675 544h5M681 544h5M687 544h5M693 544h5M699 544h4M704 544h5M710 544h5M716 544h5M722 544h5M728 544h5M734 544h5M740 544h5M746 544h5M752 544h5M758 544h5M764 544h5M770 544h5M776 544h5M782 544h5M788 544h5M794 544h5M800 544h5M636 550h5M642 550h5M648 550h5M654 550h5M660 550h5M666 550h5M672 550h5M678 550h5M684 550h5M690 550h5M696 550h5M702 550h4M707 550h5M713 550h5M719 550h5M725 550h5M731 550h5M737 550h5M743 550h5M749 550h5M755 550h5M761 550h5M767 550h5M773 550h5M779 550h5M785 550h5M791 550h5M797 550h5M803 550h5M633 556h5M639 556h5M645 556h5M651 556h5M657 556h5M663 556h5M669 556h5M675 556h5M681 556h5M687 556h5M693 556h5M699 556h4M704 556h5M710 556h5M716 556h5M722 556h5M728 556h5M734 556h5M740 556h5M746 556h5M752 556h5M758 556h5M764 556h5M770 556h5M776 556h5M782 556h5M788 556h5M794 556h5M800 556h5M636 562h5M642 562h5M648 562h5M654 562h5M660 562h5M666 562h5M672 562h5M678 562h5M684 562h5M690 562h5M696 562h5M702 562h4M707 562h5M713 562h5M719 562h5M725 562h5M731 562h5M737 562h5M743 562h5M749 562h5M755 562h5M761 562h5M767 562h5M773 562h5M779 562h5M785 562h5M791 562h5M797 562h5M803 562h5M633 568h5M639 568h5M645 568h5M651 568h5M657 568h5M663 568h5M669 568h5M675 568h5M681 568h5M687 568h5M693 568h5M699 568h4M704 568h5M710 568h5M716 568h5M722 568h5M728 568h5M734 568h5M740 568h5M746 568h5M752 568h5M758 568h5M764 568h5M770 568h5M776 568h5M782 568h5M788 568h5M794 568h5M800 568h5M636 574h5M642 574h5M648 574h5M654 574h5M660 574h5M666 574h5M672 574h5M678 574h5M684 574h5M690 574h5M696 574h5M702 574h4M707 574h5M713 574h5M719 574h5M725 574h5M731 574h5M737 574h5M743 574h5M749 574h5M755 574h5M761 574h5M767 574h5M773 574h5M779 574h5M785 574h5M791 574h5M797 574h5M803 574h5M633 580h5M639 580h5M645 580h5M651 580h5M657 580h5M663 580h5M669 580h5M675 580h5M681 580h5M687 580h5M693 580h5M699 580h4M704 580h5M710 580h5M716 580h5M722 580h5M728 580h5M734 580h5M740 580h5M746 580h5M752 580h5M758 580h5M764 580h5M770 580h5M776 580h5M782 580h5M788 580h5M794 580h5M800 580h5M636 586h5M642 586h5M648 586h5M654 586h5M660 586h5M666 586h5M672 586h5M678 586h5M684 586h5M690 586h5M696 586h5M702 586h4M707 586h5M713 586h5M719 586h5M725 586h5M731 586h5M737 586h5M743 586h5M749 586h5M755 586h5M761 586h5M767 586h5M773 586h5M779 586h5M785 586h5M791 586h5M797 586h5M803 586h5M633 592h5M639 592h5M645 592h5M651 592h5M657 592h5M663 592h5M669 592h5M675 592h5M681 592h5M687 592h5M693 592h5M699 592h4M704 592h5M710 592h5M716 592h5M722 592h5M728 592h5M734 592h5M740 592h5M746 592h5M752 592h5M758 592h5M764 592h5M770 592h5M776 592h5M782 592h5M788 592h5M794 592h5M800 592h5M636 598h5M642 598h5M648 598h5M654 598h5M660 598h5M666 598h5M672 598h5M678 598h5M684 598h5M690 598h5M696 598h5M702 598h4M707 598h5M713 598h5M719 598h5M725 598h5M731 598h5M737 598h5M743 598h5M749 598h5M755 598h5M761 598h5M767 598h5M773 598h5M779 598h5M785 598h5M791 598h5M797 598h5M803 598h5M633 604h5M639 604h5M645 604h5M651 604h5M657 604h5M663 604h5M669 604h5M675 604h5M681 604h5M687 604h5M693 604h5M699 604h4M704 604h5M710 604h5M716 604h5M722 604h5M728 604h5M734 604h5M740 604h5M746 604h5M752 604h5M758 604h5M764 604h5M770 604h5M776 604h5M782 604h5M788 604h5M794 604h5M800 604h5M636 610h5M642 610h5M648 610h5M654 610h5M660 610h5M666 610h5M672 610h5M678 610h5M684 610h5M690 610h5M696 610h5M702 610h4M707 610h5M713 610h5M719 610h5M725 610h5M731 610h5M737 610h5M743 610h5M749 610h5M755 610h5M761 610h5M767 610h5M773 610h5M779 610h5M785 610h5M791 610h5M797 610h5M803 610h5M633 616h5M639 616h5M645 616h5M651 616h5M657 616h5M663 616h5M669 616h5M675 616h5M681 616h5M687 616h5M693 616h5M699 616h4M704 616h5M710 616h5M716 616h5M722 616h5M728 616h5M734 616h5M740 616h5M746 616h5M752 616h5M758 616h5M764 616h5M770 616h5M776 616h5M782 616h5M788 616h5M794 616h5M800 616h5M636 621h5M642 621h5M648 621h5M654 621h5M660 621h5M666 621h5M672 621h5M678 621h5M684 621h5M690 621h5M696 621h5M702 621h4M707 621h5M713 621h5M719 621h5M725 621h5M731 621h5M737 621h5M743 621h5M749 621h5M755 621h5M761 621h5M767 621h5M773 621h5M779 621h5M785 621h5M791 621h5M797 621h5M803 621h5M633 627h5M639 627h5M645 627h5M651 627h5M657 627h5M663 627h5M669 627h5M675 627h5M681 627h5M687 627h5M693 627h5M699 627h4M704 627h5M710 627h5M716 627h5M722 627h5M728 627h5M734 627h5M740 627h5M746 627h5M752 627h5M758 627h5M764 627h5M770 627h5M776 627h5M782 627h5M788 627h5M794 627h5M800 627h5M636 633h5M642 633h5M648 633h5M654 633h5M660 633h5M666 633h5M672 633h5M678 633h5M684 633h5M690 633h5M696 633h5M702 633h4M707 633h5M713 633h5M719 633h5M725 633h5M731 633h5M737 633h5M743 633h5M749 633h5M755 633h5M761 633h5M767 633h5M773 633h5M779 633h5M785 633h5M791 633h5M797 633h5M803 633h5M633 639h5M639 639h5M645 639h5M651 639h5M657 639h5M663 639h5M669 639h5M675 639h5M681 639h5M687 639h5M693 639h5M699 639h4M704 639h5M710 639h5M716 639h5M722 639h5M728 639h5M734 639h5M740 639h5M746 639h5M752 639h5M758 639h5M764 639h5M770 639h5M776 639h5M782 639h5M788 639h5M794 639h5M800 639h5M636 645h5M642 645h5M648 645h5M654 645h5M660 645h5M666 645h5M672 645h5M678 645h5M684 645h5M690 645h5M696 645h5M702 645h4M707 645h5M713 645h5M719 645h5M725 645h5M731 645h5M737 645h5M743 645h5M749 645h5M755 645h5M761 645h5M767 645h5M773 645h5M779 645h5M785 645h5M791 645h5M797 645h5M803 645h5M633 651h5M639 651h5M645 651h5M651 651h5M657 651h5M663 651h5M669 651h5M675 651h5M681 651h5M687 651h5M693 651h5M699 651h4M704 651h5M710 651h5M716 651h5M722 651h5M728 651h5M734 651h5M740 651h5M746 651h5M752 651h5M758 651h5M764 651h5M770 651h5M776 651h5M782 651h5M788 651h5M794 651h5M800 651h5M636 657h5M642 657h5M648 657h5M654 657h5M660 657h5M666 657h5M672 657h5M678 657h5M684 657h5M690 657h5M696 657h5M702 657h4M707 657h5M713 657h5M719 657h5M725 657h5M731 657h5M737 657h5M743 657h5M749 657h5M755 657h5M761 657h5M767 657h5M773 657h5M779 657h5M785 657h5M791 657h5M797 657h5M803 657h5M633 663h5M639 663h5M645 663h5M651 663h5M657 663h5M663 663h5M669 663h5M675 663h5M681 663h5M687 663h5M693 663h5M699 663h4M704 663h5M710 663h5M716 663h5M722 663h5M728 663h5M734 663h5M740 663h5M746 663h5M752 663h5M758 663h5M764 663h5M770 663h5M776 663h5M782 663h5M788 663h5M794 663h5M800 663h5M636 669h5M642 669h5M648 669h5M654 669h5M660 669h5M666 669h5M672 669h5M678 669h5M684 669h5M690 669h5M696 669h5M702 669h4M707 669h5M713 669h5M719 669h5M725 669h5M731 669h5M737 669h5M743 669h5M749 669h5M755 669h5M761 669h5M767 669h5M773 669h5M779 669h5M785 669h5M791 669h5M797 669h5M803 669h5M633 675h5M639 675h5M645 675h5M651 675h5M657 675h5M663 675h5M669 675h5M675 675h5M681 675h5M687 675h5M693 675h5M699 675h4M704 675h5M710 675h5M716 675h5M722 675h5M728 675h5M734 675h5M740 675h5M746 675h5M752 675h5M758 675h5M764 675h5M770 675h5M776 675h5M782 675h5M788 675h5M794 675h5M800 675h5M636 681h5M642 681h5M648 681h5M654 681h5M660 681h5M666 681h5M672 681h5M678 681h5M684 681h5M690 681h5M696 681h5M702 681h4M707 681h5M713 681h5M719 681h5M725 681h5M731 681h5M737 681h5M743 681h5M749 681h5M755 681h5M761 681h5M767 681h5M773 681h5M779 681h5M785 681h5M791 681h5M797 681h5M803 681h5M633 687h5M639 687h5M645 687h5M651 687h5M657 687h5M663 687h5M669 687h5M675 687h5M681 687h5M687 687h5M693 687h5M699 687h4M704 687h5M710 687h5M716 687h5M722 687h5M728 687h5M734 687h5M740 687h5M746 687h5M752 687h5M758 687h5M764 687h5M770 687h5M776 687h5M782 687h5M788 687h5M794 687h5M800 687h5M636 693h5M642 693h5M648 693h5M654 693h5M660 693h5M666 693h5M672 693h5M678 693h5M684 693h5M690 693h5M696 693h5M702 693h4M707 693h5M713 693h5M719 693h5M725 693h5M731 693h5M737 693h5M743 693h5M749 693h5M755 693h5M761 693h5M767 693h5M773 693h5M779 693h5M785 693h5M791 693h5M797 693h5M803 693h5M633 699h5M639 699h5M645 699h5M651 699h5M657 699h5M663 699h5M669 699h5M675 699h5M681 699h5M687 699h5M693 699h5M699 699h4M704 699h5M710 699h5M716 699h5M722 699h5M728 699h5M734 699h5M740 699h5M746 699h5M752 699h5M758 699h5M764 699h5M770 699h5M776 699h5M782 699h5M788 699h5M794 699h5M800 699h5M636 705h5M642 705h5M648 705h5M654 705h5M660 705h5M666 705h5M672 705h5M678 705h5M684 705h5M690 705h5M696 705h5M702 705h4M707 705h5M713 705h5M719 705h5M725 705h5M731 705h5M737 705h5M743 705h5M749 705h5M755 705h5M761 705h5M767 705h5M773 705h5M779 705h5M785 705h5M791 705h5M797 705h5M803 705h5M633 711h5M639 711h5M645 711h5M651 711h5M657 711h5M663 711h5M669 711h5M675 711h5M681 711h5M687 711h5M693 711h5M699 711h4M704 711h5M710 711h5M716 711h5M722 711h5M728 711h5M734 711h5M740 711h5M746 711h5M752 711h5M758 711h5M764 711h5M770 711h5M776 711h5M782 711h5M788 711h5M794 711h5M800 711h5M636 717h5M642 717h5M648 717h5M654 717h5M660 717h5M666 717h5M672 717h5M678 717h5M684 717h5M690 717h5M696 717h5M702 717h4M707 717h5M713 717h5M719 717h5M725 717h5M731 717h5M737 717h5M743 717h5M749 717h5M755 717h5M761 717h5M767 717h5M773 717h5M779 717h5M785 717h5M791 717h5M797 717h5M803 717h5M633 722h5M639 722h5M645 722h5M651 722h5M657 722h5M663 722h5M669 722h5M675 722h5M681 722h5M687 722h5M693 722h5M699 722h4M704 722h5M710 722h5M716 722h5M722 722h5M728 722h5M734 722h5M740 722h5M746 722h5M752 722h5M758 722h5M764 722h5M770 722h5M776 722h5M782 722h5M788 722h5M794 722h5M800 722h5M636 728h5M642 728h5M648 728h5M654 728h5M660 728h5M666 728h5M672 728h5M678 728h5M684 728h5M690 728h5M696 728h5M702 728h4M707 728h5M713 728h5M719 728h5M725 728h5M731 728h5M737 728h5M743 728h5M749 728h5M755 728h5M761 728h5M767 728h5M773 728h5M779 728h5M785 728h5M791 728h5M797 728h5M803 728h5M633 734h5M639 734h5M645 734h5M651 734h5M657 734h5M663 734h5M669 734h5M675 734h5M681 734h5M687 734h5M693 734h5M699 734h4M704 734h5M710 734h5M716 734h5M722 734h5M728 734h5M734 734h5M740 734h5M746 734h5M752 734h5M758 734h5M764 734h5M770 734h5M776 734h5M782 734h5M788 734h5M794 734h5M800 734h5M636 740h5M642 740h5M648 740h5M654 740h5M660 740h5M666 740h5M672 740h5M678 740h5M684 740h5M690 740h5M696 740h5M702 740h4M707 740h5M713 740h5M719 740h5M725 740h5M731 740h5M737 740h5M743 740h5M749 740h5M755 740h5M761 740h5M767 740h5M773 740h5M779 740h5M785 740h5M791 740h5M797 740h5M803 740h5M633 746h5M639 746h5M645 746h5M651 746h5M657 746h5M663 746h5M669 746h5M675 746h5M681 746h5M687 746h5M693 746h5M699 746h4M704 746h5M710 746h5M716 746h5M722 746h5M728 746h5M734 746h5M740 746h5M746 746h5M752 746h5M758 746h5M764 746h5M770 746h5M776 746h5M782 746h5M788 746h5M794 746h5M800 746h5M636 752h5M642 752h5M648 752h5M654 752h5M660 752h5M666 752h5M672 752h5M678 752h5M684 752h5M690 752h5M696 752h5M702 752h4M707 752h5M713 752h5M719 752h5M725 752h5M731 752h5M737 752h5M743 752h5M749 752h5M755 752h5M761 752h5M767 752h5M773 752h5M779 752h5M785 752h5M791 752h5M797 752h5M803 752h5M633 758h5M639 758h5M645 758h5M651 758h5M657 758h5M663 758h5M669 758h5M675 758h5M681 758h5M687 758h5M693 758h5M699 758h4M704 758h5M710 758h5M716 758h5M722 758h5M728 758h5M734 758h5M740 758h5M746 758h5M752 758h5M758 758h5M764 758h5M770 758h5M776 758h5M782 758h5M788 758h5M794 758h5M800 758h5M636 764h5M642 764h5M648 764h5M654 764h5M660 764h5M666 764h5M672 764h5M678 764h5M684 764h5M690 764h5M696 764h5M702 764h4M707 764h5M713 764h5M719 764h5M725 764h5M731 764h5M737 764h5M743 764h5M749 764h5M755 764h5M761 764h5M767 764h5M773 764h5M779 764h5M785 764h5M791 764h5M797 764h5M803 764h5M633 770h5M639 770h5M645 770h5M651 770h5M657 770h5M663 770h5M669 770h5M675 770h5M681 770h5M687 770h5M693 770h5M699 770h4M704 770h5M710 770h5M716 770h5M722 770h5M728 770h5M734 770h5M740 770h5M746 770h5M752 770h5M758 770h5M764 770h5M770 770h5M776 770h5M782 770h5M788 770h5M794 770h5M800 770h5M636 776h5M642 776h5M648 776h5M654 776h5M660 776h5M666 776h5M672 776h5M678 776h5M684 776h5M690 776h5M696 776h5M702 776h4M707 776h5M713 776h5M719 776h5M725 776h5M731 776h5M737 776h5M743 776h5M749 776h5M755 776h5M761 776h5M767 776h5M773 776h5M779 776h5M785 776h5M791 776h5M797 776h5M803 776h5" stroke="#ffffff" stroke-width="2"/></g><path d="M645.5 378.5V774.5M649.5 378.5V774.5M656.5 378.5V774.5M661.5 378.5V774.5M779.5 378.5V774.5M783.5 378.5V774.5M791.5 378.5V774.5M795.5 378.5V774.5" stroke="#fcc8a8" stroke-width="1" fill="none" shape-rendering="crispEdges"/><rect x="641.5" y="378.5" width="158" height="396" fill="none" stroke="#a83c08" stroke-width="1" shape-rendering="crispEdges"/><path d="M720.5 377.8V774.2" stroke="#f4f4f4" stroke-width="1"/><circle cx="720.5" cy="377.8" r="2.2" fill="#fff"/><path d="M717.5 775.2h6l-3-4.5z" fill="#f4f4f4"/><circle cx="720" cy="576" r="3.8" fill="#ffd000" stroke="#e89000" stroke-width="1"/><rect x="631.5" y="368.5" width="4" height="4" fill="#fff" stroke="#000" stroke-width="1" shape-rendering="crispEdges"/><rect x="631.5" y="780.5" width="4" height="4" fill="#fff" stroke="#000" stroke-width="1" shape-rendering="crispEdges"/><rect x="723.5" y="777.5" width="104" height="19" fill="#fff" stroke="#000" stroke-width="1"/><text x="726.5" y="790" font-size="10.5" fill="#000">Embankment Load 1</text></svg></div>
<div id="view3d"><div class="abs" style="left:1119px;top:133px;width:795px;height:903px;background:#ffffff;border-left:2px solid #6c6c6c;border-top:2px solid #6c6c6c;border-right:1px solid #e4e4e4;box-sizing:border-box;"></div><svg width="1920" height="1086" viewBox="0 0 1920 1086" style="left:0;top:0" font-family="Liberation Sans, sans-serif" ><polygon points="1246.9,674.4 1588.5,780.0 1588.3,783.7 1247.6,678.1" fill="#eef0d0"/><polygon points="1247.6,678.1 1588.3,783.7 1587.7,794.7 1249.7,689.1" fill="#d6e6d6"/><polygon points="1249.7,689.1 1587.7,794.7 1586.9,809.4 1252.5,703.8" fill="#f8e0cc"/><polygon points="1588.5,780.0 1761.2,447.1 1760.9,450.6 1588.3,783.7" fill="#e6e8c4"/><polygon points="1588.3,783.7 1760.9,450.6 1760.0,461.2 1587.7,794.7" fill="#cfe0cf"/><polygon points="1587.7,794.7 1760.0,461.2 1758.8,475.4 1586.9,809.4" fill="#f2d8c2"/><path d="M1247.6 678.1L1588.3 783.7" stroke="#a8a020" stroke-width="1" fill="none"/><path d="M1588.3 783.7L1760.9 450.6" stroke="#a8a020" stroke-width="1" fill="none"/><path d="M1249.7 689.1L1587.7 794.7" stroke="#2a7a3a" stroke-width="1" fill="none"/><path d="M1587.7 794.7L1760.0 461.2" stroke="#2a7a3a" stroke-width="1" fill="none"/><path d="M1252.5 703.8L1586.9 809.4" stroke="#a85010" stroke-width="1.6" fill="none"/><path d="M1586.9 809.4L1758.8 475.4" stroke="#a85010" stroke-width="1.6" fill="none"/><path d="M1588.5 780.0L1587.7 794.7" stroke="#2a7a3a" stroke-width="1" fill="none"/><path d="M1587.7 794.7L1586.9 809.4" stroke="#a85010" stroke-width="1.3" fill="none"/><path d="M1249.7 689.1L1252.5 703.8" stroke="#a85010" stroke-width="1.3" fill="none"/><path d="M1760.0 461.2L1758.8 475.4" stroke="#a85010" stroke-width="1.3" fill="none"/><path d="M1252.5 703.8L1266.0 681.0" stroke="#a86a30" stroke-width="1" fill="none"/><polygon points="1457.1,364.6 1761.2,447.1 1588.5,780.0 1246.9,674.4" fill="#341c54"/><polygon points="1613.2,477.5 1616.1,478.5 1618.8,479.8 1621.1,481.4 1623.0,483.3 1624.6,485.3 1625.6,487.5 1626.1,489.8 1626.2,492.1 1625.7,494.4 1624.7,496.6 1534.7,655.4 1533.0,657.8 1530.9,660.0 1528.4,661.9 1525.5,663.5 1522.3,664.8 1518.9,665.7 1515.4,666.1 1511.9,666.2 1508.4,665.8 1505.0,665.1 1414.5,637.9 1411.4,636.7 1408.7,635.2 1406.4,633.4 1404.4,631.4 1403.0,629.1 1402.1,626.6 1401.8,624.0 1402.0,621.5 1402.7,618.9 1404.0,616.4 1501.3,462.0 1502.8,460.0 1504.8,458.2 1507.1,456.5 1509.8,455.2 1512.7,454.1 1515.8,453.4 1519.0,453.0 1522.3,453.0 1525.5,453.3 1528.5,454.0" fill="#47307e"/><polygon points="1513.7,460.2 1517.7,460.8 1521.8,461.1 1526.0,461.3 1530.2,461.4 1534.5,461.5 1538.7,461.6 1542.9,461.8 1547.0,462.1 1551.1,462.5 1555.1,462.9 1559.1,463.5 1563.0,464.2 1566.8,465.1 1570.5,466.0 1574.2,467.1 1577.7,468.3 1581.2,469.7 1584.7,471.2 1588.1,472.8 1591.4,474.5 1594.6,476.3 1597.9,478.1 1601.1,480.1 1604.3,482.0 1607.5,484.0 1610.7,485.9 1614.0,487.7 1617.5,489.2 1521.2,657.6 1516.9,656.9 1512.4,656.6 1507.9,656.4 1503.3,656.3 1498.7,656.2 1494.1,656.0 1489.6,655.8 1485.1,655.5 1480.7,655.1 1476.3,654.6 1472.0,653.9 1467.9,653.1 1463.8,652.1 1459.8,651.0 1455.9,649.8 1452.1,648.4 1448.4,646.8 1444.7,645.1 1441.2,643.3 1437.7,641.3 1434.3,639.3 1431.0,637.1 1427.7,634.9 1424.5,632.7 1421.2,630.5 1417.9,628.3 1414.5,626.3 1410.9,624.6" fill="#563ea0"/><polygon points="1514.3,460.4 1518.1,461.1 1522.0,461.7 1526.0,462.1 1530.0,462.6 1533.9,463.0 1537.9,463.5 1541.9,464.0 1545.8,464.5 1549.7,465.1 1553.6,465.8 1557.4,466.5 1561.2,467.3 1564.9,468.2 1568.6,469.2 1572.2,470.3 1575.8,471.4 1579.4,472.6 1582.9,473.9 1586.3,475.3 1589.8,476.8 1593.1,478.3 1596.5,479.8 1599.9,481.4 1603.2,483.0 1606.6,484.6 1610.0,486.2 1613.4,487.7 1616.9,489.0 1520.6,657.4 1516.5,656.6 1512.2,655.9 1507.9,655.4 1503.6,654.9 1499.3,654.4 1495.0,653.9 1490.7,653.3 1486.4,652.7 1482.2,652.0 1478.1,651.2 1474.0,650.4 1469.9,649.5 1465.9,648.4 1462.0,647.3 1458.1,646.1 1454.3,644.8 1450.6,643.4 1446.9,641.9 1443.2,640.3 1439.6,638.7 1436.1,637.0 1432.6,635.2 1429.1,633.4 1425.7,631.6 1422.2,629.8 1418.7,628.0 1415.2,626.3 1411.5,624.8" fill="#5648b5"/><polygon points="1514.7,460.5 1518.4,461.3 1522.3,461.9 1526.1,462.5 1530.0,463.1 1533.9,463.7 1537.7,464.3 1541.6,464.9 1545.4,465.5 1549.2,466.2 1553.0,467.0 1556.8,467.8 1560.5,468.6 1564.2,469.5 1567.8,470.5 1571.4,471.5 1575.0,472.7 1578.5,473.8 1582.1,475.1 1585.5,476.3 1589.0,477.7 1592.4,479.1 1595.8,480.5 1599.2,481.9 1602.6,483.4 1606.0,484.9 1609.5,486.3 1612.9,487.7 1616.5,488.9 1520.1,657.3 1516.1,656.4 1511.9,655.6 1507.7,654.9 1503.6,654.3 1499.4,653.6 1495.2,652.9 1491.0,652.2 1486.9,651.5 1482.8,650.7 1478.7,649.9 1474.7,649.0 1470.7,648.0 1466.8,646.9 1462.9,645.8 1459.1,644.6 1455.3,643.3 1451.5,642.0 1447.8,640.6 1444.1,639.1 1440.5,637.6 1436.9,636.1 1433.4,634.4 1429.8,632.8 1426.3,631.2 1422.8,629.5 1419.3,627.9 1415.7,626.3 1412.0,625.0" fill="#5256c8"/><polygon points="1515.2,460.6 1518.8,461.5 1522.6,462.2 1526.3,462.9 1530.1,463.6 1533.8,464.3 1537.6,465.0 1541.4,465.7 1545.1,466.4 1548.8,467.2 1552.5,468.0 1556.2,468.8 1559.9,469.7 1563.5,470.6 1567.1,471.6 1570.7,472.7 1574.3,473.7 1577.8,474.8 1581.3,476.0 1584.8,477.2 1588.3,478.5 1591.8,479.7 1595.2,481.0 1598.7,482.4 1602.1,483.7 1605.5,485.0 1609.0,486.3 1612.5,487.6 1616.0,488.8 1519.6,657.1 1515.6,656.1 1511.6,655.3 1507.5,654.5 1503.5,653.7 1499.4,652.9 1495.3,652.1 1491.3,651.3 1487.3,650.5 1483.3,649.6 1479.3,648.7 1475.3,647.7 1471.4,646.7 1467.5,645.6 1463.7,644.5 1459.9,643.3 1456.1,642.1 1452.3,640.8 1448.6,639.5 1445.0,638.1 1441.3,636.7 1437.7,635.3 1434.1,633.8 1430.5,632.3 1426.9,630.8 1423.4,629.3 1419.8,627.8 1416.2,626.4 1412.5,625.1" fill="#4a66dc"/><polygon points="1515.6,460.7 1519.2,461.6 1522.9,462.4 1526.5,463.2 1530.2,464.0 1533.9,464.8 1537.6,465.5 1541.2,466.3 1544.9,467.1 1548.5,468.0 1552.2,468.8 1555.8,469.7 1559.4,470.6 1563.0,471.6 1566.6,472.6 1570.1,473.6 1573.7,474.6 1577.2,475.7 1580.7,476.8 1584.2,477.9 1587.7,479.1 1591.2,480.3 1594.6,481.5 1598.1,482.7 1601.6,483.9 1605.0,485.2 1608.5,486.4 1612.0,487.5 1615.6,488.7 1519.1,657.0 1515.2,656.0 1511.3,655.0 1507.3,654.1 1503.3,653.2 1499.4,652.3 1495.4,651.4 1491.5,650.5 1487.5,649.6 1483.6,648.7 1479.7,647.7 1475.8,646.7 1472.0,645.6 1468.1,644.5 1464.3,643.4 1460.6,642.3 1456.8,641.1 1453.1,639.8 1449.4,638.6 1445.7,637.3 1442.0,636.0 1438.3,634.7 1434.7,633.3 1431.1,631.9 1427.5,630.5 1423.9,629.2 1420.3,627.8 1416.6,626.5 1413.0,625.2" fill="#4076ec"/><polygon points="1516.1,460.9 1519.6,461.8 1523.2,462.7 1526.7,463.5 1530.3,464.4 1533.9,465.3 1537.5,466.1 1541.1,467.0 1544.7,467.9 1548.2,468.8 1551.8,469.7 1555.4,470.6 1558.9,471.6 1562.5,472.5 1566.0,473.5 1569.5,474.5 1573.1,475.5 1576.6,476.5 1580.1,477.6 1583.6,478.7 1587.1,479.7 1590.6,480.8 1594.1,481.9 1597.6,483.0 1601.1,484.2 1604.6,485.3 1608.1,486.4 1611.6,487.5 1615.1,488.5 1518.6,656.8 1514.8,655.8 1511.0,654.7 1507.1,653.7 1503.2,652.8 1499.4,651.8 1495.5,650.8 1491.6,649.8 1487.8,648.7 1484.0,647.7 1480.1,646.7 1476.3,645.6 1472.5,644.5 1468.7,643.4 1465.0,642.3 1461.2,641.2 1457.5,640.0 1453.8,638.9 1450.1,637.7 1446.4,636.5 1442.7,635.3 1439.0,634.0 1435.4,632.8 1431.7,631.5 1428.1,630.3 1424.4,629.0 1420.8,627.8 1417.1,626.6 1413.4,625.4" fill="#3586f4"/><polygon points="1613.8,488.3 1614.0,488.4 1614.1,488.6 1614.0,488.7 1518.1,656.1 1517.9,656.2 1517.7,656.3 1517.4,656.3 1414.8,625.6 1414.6,625.5 1414.5,625.3 1414.6,625.2 1516.6,461.5 1516.7,461.4 1516.9,461.3 1517.2,461.4" fill="#3b7df0"/><polygon points="1613.1,488.4 1613.4,488.5 1613.5,488.7 1613.5,488.9 1517.8,655.6 1517.6,655.8 1517.3,655.9 1516.9,655.9 1415.6,625.6 1415.3,625.4 1415.2,625.2 1415.2,625.0 1516.8,461.9 1517.0,461.7 1517.3,461.7 1517.6,461.7" fill="#3389f3"/><polygon points="1612.5,488.4 1612.8,488.6 1612.9,488.8 1612.9,489.1 1517.6,655.2 1517.3,655.4 1516.9,655.5 1516.5,655.5 1416.3,625.6 1415.9,625.4 1415.8,625.1 1415.8,624.8 1517.0,462.3 1517.3,462.1 1517.7,462.0 1518.1,462.0" fill="#2a96ef"/><polygon points="1612.0,488.5 1612.4,488.7 1612.6,489.0 1612.5,489.3 1517.5,654.8 1517.2,655.1 1516.7,655.2 1516.2,655.2 1416.8,625.5 1416.4,625.2 1416.2,624.9 1416.2,624.5 1517.1,462.6 1517.4,462.4 1517.8,462.2 1518.3,462.3" fill="#26a1eb"/><polygon points="1611.5,488.5 1612.0,488.8 1612.2,489.1 1612.2,489.5 1517.5,654.4 1517.1,654.7 1516.5,654.9 1515.9,654.9 1417.3,625.4 1416.8,625.1 1416.6,624.7 1416.7,624.3 1517.1,463.0 1517.5,462.7 1518.0,462.5 1518.6,462.6" fill="#23ace5"/><polygon points="1611.1,488.6 1611.6,488.9 1611.9,489.3 1611.8,489.7 1517.5,654.0 1517.0,654.4 1516.4,654.6 1515.6,654.6 1417.8,625.3 1417.2,625.0 1417.0,624.5 1417.1,624.0 1517.2,463.3 1517.6,462.9 1518.2,462.8 1518.8,462.8" fill="#20b7de"/><polygon points="1610.6,488.6 1611.2,489.0 1611.5,489.4 1611.4,489.9 1517.4,653.7 1516.9,654.1 1516.2,654.3 1515.4,654.3 1418.2,625.2 1417.6,624.9 1417.3,624.4 1417.5,623.8 1517.2,463.6 1517.7,463.2 1518.3,463.0 1519.1,463.1" fill="#20c2d5"/><polygon points="1610.2,488.7 1610.8,489.0 1611.2,489.6 1611.1,490.1 1517.3,653.3 1516.8,653.8 1516.0,654.1 1515.1,654.0 1418.7,625.2 1418.0,624.8 1417.7,624.2 1417.9,623.6 1517.3,463.9 1517.8,463.4 1518.5,463.2 1519.3,463.3" fill="#22cbca"/><polygon points="1609.6,488.7 1610.3,489.1 1610.7,489.7 1610.6,490.3 1517.1,652.9 1516.5,653.5 1515.6,653.7 1514.7,653.7 1419.3,625.2 1418.6,624.8 1418.2,624.1 1418.4,623.4 1517.5,464.2 1518.0,463.7 1518.8,463.5 1519.7,463.6" fill="#26d4be"/><polygon points="1609.0,488.7 1609.8,489.1 1610.2,489.7 1610.1,490.4 1516.9,652.5 1516.2,653.1 1515.3,653.4 1514.2,653.3 1420.0,625.2 1419.2,624.7 1418.8,624.0 1419.0,623.3 1517.7,464.6 1518.3,464.0 1519.2,463.8 1520.1,463.9" fill="#2cdcb0"/><polygon points="1608.4,488.7 1609.2,489.2 1609.7,489.8 1609.6,490.5 1516.6,652.1 1515.9,652.8 1514.9,653.1 1513.8,653.0 1420.6,625.1 1419.7,624.7 1419.3,623.9 1419.5,623.1 1517.9,464.9 1518.6,464.4 1519.5,464.1 1520.5,464.2" fill="#34e3a2"/><polygon points="1607.7,488.8 1608.7,489.2 1609.1,490.0 1609.0,490.7 1516.4,651.7 1515.7,652.4 1514.5,652.7 1513.3,652.6 1421.3,625.1 1420.4,624.6 1419.9,623.8 1420.1,622.9 1518.1,465.3 1518.8,464.7 1519.9,464.4 1521.0,464.5" fill="#3ee992"/><polygon points="1606.9,488.9 1607.9,489.4 1608.4,490.2 1608.3,491.1 1516.3,651.0 1515.4,651.8 1514.2,652.2 1512.8,652.0 1422.2,625.0 1421.2,624.4 1420.7,623.5 1420.9,622.5 1518.3,465.9 1519.0,465.2 1520.2,464.9 1521.5,465.0" fill="#4aef82"/><polygon points="1606.0,488.9 1607.1,489.5 1607.7,490.4 1607.5,491.4 1516.0,650.3 1515.1,651.2 1513.7,651.6 1512.2,651.5 1423.2,624.9 1422.0,624.3 1421.5,623.3 1421.7,622.2 1518.5,466.4 1519.3,465.7 1520.7,465.3 1522.0,465.5" fill="#5bf471"/><polygon points="1605.0,489.0 1606.3,489.6 1606.9,490.6 1606.8,491.7 1515.8,649.6 1514.8,650.6 1513.2,651.1 1511.5,650.9 1424.2,624.8 1422.9,624.1 1422.3,623.0 1422.6,621.8 1518.7,467.0 1519.7,466.2 1521.1,465.8 1522.6,466.0" fill="#6cf862"/><polygon points="1604.1,489.1 1605.5,489.8 1606.2,490.8 1606.0,492.0 1515.5,649.0 1514.4,650.0 1512.7,650.5 1510.9,650.3 1425.2,624.8 1423.8,624.0 1423.1,622.8 1423.4,621.5 1518.9,467.6 1520.0,466.7 1521.5,466.3 1523.2,466.4" fill="#7dfa56"/><polygon points="1603.2,489.1 1604.7,489.9 1605.4,491.1 1605.2,492.3 1515.3,648.3 1514.1,649.4 1512.3,650.0 1510.3,649.8 1426.2,624.7 1424.7,623.8 1424.0,622.5 1424.3,621.1 1519.2,468.2 1520.3,467.2 1522.0,466.8 1523.8,466.9" fill="#8efc4d"/><polygon points="1602.1,489.2 1603.7,490.0 1604.5,491.2 1604.3,492.6 1514.9,647.6 1513.6,648.8 1511.7,649.4 1509.6,649.2 1427.3,624.6 1425.7,623.7 1424.9,622.3 1425.2,620.8 1519.5,468.8 1520.7,467.8 1522.5,467.3 1524.5,467.5" fill="#9efa45"/><polygon points="1601.1,489.2 1602.8,490.1 1603.7,491.4 1603.4,492.9 1514.6,646.8 1513.2,648.1 1511.1,648.8 1508.8,648.6 1428.4,624.6 1426.7,623.6 1425.9,622.1 1426.2,620.5 1519.8,469.5 1521.1,468.3 1523.1,467.8 1525.2,468.0" fill="#aff63e"/><polygon points="1600.0,489.3 1601.8,490.2 1602.8,491.7 1602.5,493.2 1514.2,646.1 1512.7,647.5 1510.5,648.1 1508.0,647.9 1429.6,624.5 1427.7,623.5 1426.8,621.9 1427.2,620.1 1520.2,470.1 1521.5,468.9 1523.6,468.3 1525.9,468.5" fill="#c0f03a"/><polygon points="1598.7,489.4 1600.7,490.4 1601.7,492.0 1601.5,493.7 1514.0,645.1 1512.4,646.6 1509.9,647.4 1507.2,647.1 1431.0,624.4 1428.9,623.2 1427.9,621.5 1428.4,619.6 1520.4,471.0 1521.9,469.7 1524.2,469.0 1526.6,469.2" fill="#d1e937"/><polygon points="1597.5,489.6 1599.6,490.7 1600.7,492.4 1600.4,494.2 1513.8,644.1 1512.0,645.8 1509.3,646.6 1506.5,646.3 1432.3,624.2 1430.1,622.9 1429.0,621.0 1429.5,619.0 1520.6,471.8 1522.2,470.4 1524.7,469.7 1527.4,469.9" fill="#e0e035"/><polygon points="1596.2,489.7 1598.5,490.9 1599.7,492.7 1599.4,494.7 1513.6,643.1 1511.6,644.9 1508.8,645.8 1505.7,645.5 1433.7,624.0 1431.3,622.7 1430.1,620.6 1430.6,618.4 1520.8,472.7 1522.6,471.1 1525.2,470.4 1528.1,470.6" fill="#edd633"/><polygon points="1594.9,489.8 1597.5,491.1 1598.7,493.1 1598.4,495.2 1513.3,642.2 1511.3,644.1 1508.2,645.0 1504.9,644.7 1435.0,623.9 1432.4,622.4 1431.2,620.2 1431.8,617.9 1521.0,473.5 1522.9,471.9 1525.8,471.1 1528.9,471.3" fill="#f7cb2f"/><polygon points="1593.7,490.0 1596.4,491.4 1597.7,493.5 1597.3,495.7 1513.1,641.2 1510.9,643.2 1507.6,644.2 1504.1,643.9 1436.4,623.7 1433.6,622.2 1432.3,619.8 1432.9,617.3 1521.2,474.4 1523.2,472.6 1526.3,471.7 1529.6,472.0" fill="#fcbf2c"/><polygon points="1592.5,490.1 1595.3,491.5 1596.8,493.7 1596.4,496.1 1512.8,640.3 1510.5,642.5 1507.0,643.5 1503.3,643.2 1437.6,623.6 1434.7,622.0 1433.4,619.5 1433.9,616.9 1521.5,475.1 1523.6,473.2 1526.9,472.3 1530.3,472.7" fill="#ffb22a"/><polygon points="1591.2,490.1 1594.2,491.6 1595.7,493.9 1595.3,496.4 1512.3,639.5 1509.9,641.7 1506.3,642.8 1502.4,642.5 1439.0,623.6 1435.9,621.9 1434.5,619.3 1435.1,616.5 1522.0,475.8 1524.2,473.9 1527.6,473.0 1531.2,473.3" fill="#ffa428"/><polygon points="1589.9,490.1 1593.0,491.7 1594.6,494.1 1594.2,496.7 1511.8,638.6 1509.3,641.0 1505.5,642.1 1501.4,641.7 1440.4,623.5 1437.2,621.8 1435.7,619.1 1436.3,616.2 1522.4,476.6 1524.7,474.6 1528.3,473.6 1532.1,473.9" fill="#ff9827"/><polygon points="1588.6,490.2 1591.9,491.8 1593.5,494.3 1593.0,497.1 1511.4,637.8 1508.7,640.2 1504.8,641.4 1500.5,641.0 1441.7,623.5 1438.4,621.6 1436.9,618.8 1437.5,615.8 1522.9,477.4 1525.3,475.2 1529.0,474.2 1533.0,474.6" fill="#ff8d25"/><polygon points="1587.3,490.2 1590.7,491.9 1592.4,494.6 1591.9,497.4 1510.9,636.9 1508.1,639.5 1504.0,640.7 1499.6,640.3 1443.1,623.5 1439.6,621.5 1438.0,618.6 1438.7,615.5 1523.3,478.1 1525.9,475.9 1529.7,474.8 1533.9,475.2" fill="#ff8024"/><polygon points="1586.0,490.2 1589.6,492.0 1591.3,494.8 1590.8,497.7 1510.4,636.0 1507.5,638.7 1503.2,640.0 1498.6,639.5 1444.5,623.4 1440.9,621.4 1439.2,618.4 1439.9,615.1 1523.8,478.9 1526.4,476.6 1530.4,475.4 1534.7,475.8" fill="#fe7221"/><polygon points="1584.7,490.3 1588.4,492.2 1590.2,495.0 1589.7,498.1 1509.9,635.1 1507.0,637.9 1502.5,639.2 1497.7,638.8 1445.9,623.4 1442.1,621.3 1440.4,618.1 1441.2,614.7 1524.2,479.7 1527.0,477.3 1531.1,476.1 1535.6,476.5" fill="#fc651e"/><polygon points="1582.8,490.6 1586.7,492.7 1588.7,495.7 1588.2,499.1 1509.9,633.5 1506.7,636.5 1501.8,637.9 1496.6,637.5 1448.0,623.0 1443.9,620.7 1442.0,617.3 1442.8,613.6 1524.2,481.1 1527.2,478.5 1531.8,477.2 1536.6,477.7" fill="#f9581b"/><polygon points="1580.8,490.9 1585.0,493.1 1587.1,496.5 1586.5,500.0 1509.7,631.8 1506.3,635.1 1501.1,636.6 1495.5,636.1 1450.1,622.6 1445.8,620.2 1443.7,616.5 1444.6,612.5 1524.4,482.6 1527.6,479.7 1532.5,478.4 1537.7,478.9" fill="#f24d17"/><polygon points="1578.4,491.4 1583.1,493.8 1585.4,497.4 1584.7,501.3 1509.7,629.9 1506.0,633.4 1500.3,635.0 1494.2,634.5 1452.6,622.1 1447.9,619.5 1445.7,615.4 1446.6,611.1 1524.4,484.3 1527.9,481.2 1533.2,479.8 1538.9,480.3" fill="#e94213"/><polygon points="1575.9,491.9 1581.0,494.5 1583.5,498.5 1582.8,502.8 1509.9,627.7 1505.8,631.5 1499.6,633.3 1493.0,632.7 1455.3,621.5 1450.1,618.6 1447.7,614.2 1448.7,609.5 1524.3,486.3 1528.1,482.9 1533.9,481.3 1540.2,481.9" fill="#df370e"/><polygon points="1572.9,492.5 1578.4,495.4 1581.2,499.8 1580.4,504.5 1510.0,625.0 1505.5,629.2 1498.7,631.2 1491.4,630.5 1458.6,620.8 1452.9,617.6 1450.2,612.8 1451.3,607.6 1524.2,488.7 1528.4,484.9 1534.8,483.2 1541.7,483.8" fill="#d42d09"/><polygon points="1569.3,493.4 1575.5,496.6 1578.5,501.5 1577.7,506.7 1510.4,621.8 1505.4,626.4 1497.8,628.6 1489.7,627.9 1462.4,619.8 1456.1,616.3 1453.1,610.9 1454.3,605.2 1523.9,491.6 1528.5,487.4 1535.7,485.4 1543.3,486.1" fill="#c72506"/><polygon points="1565.5,495.0 1572.1,498.4 1575.4,503.6 1574.4,509.2 1510.6,618.1 1505.3,623.1 1497.2,625.5 1488.6,624.6 1466.5,618.1 1459.7,614.3 1456.5,608.6 1457.8,602.5 1523.7,494.8 1528.7,490.4 1536.3,488.3 1544.4,489.0" fill="#ba1d03"/><polygon points="1560.8,496.9 1567.9,500.5 1571.5,506.2 1570.4,512.2 1510.9,613.6 1505.2,618.9 1496.5,621.5 1487.2,620.6 1471.5,616.0 1464.2,611.9 1460.8,605.8 1462.1,599.3 1523.4,498.9 1528.8,494.1 1537.0,491.8 1545.8,492.6" fill="#ac1602"/><polygon points="1553.0,499.4 1561.0,503.6 1564.9,509.9 1563.7,516.8 1510.9,606.6 1504.5,612.5 1494.7,615.4 1484.2,614.4 1479.9,613.1 1471.6,608.6 1467.7,601.7 1469.3,594.4 1523.4,505.3 1529.6,499.9 1538.8,497.3 1548.8,498.2" fill="#9e0f01"/><polygon points="1545.7,507.5 1549.8,511.1 1550.2,518.2 1546.8,526.7 1509.1,590.2 1502.5,598.5 1494.7,603.6 1487.7,604.3 1487.7,604.3 1483.6,600.4 1483.3,592.8 1487.1,583.8 1525.2,520.6 1531.6,512.9 1539.0,508.1 1545.7,507.5" fill="#920a00"/><polygon points="1457.1,364.6 1761.2,447.1 1588.5,780.0 1246.9,674.4" fill="none" stroke="#0000ff" stroke-width="1.2"/><polygon points="1516.5,461.0 1614.7,488.4 1518.2,656.7 1413.9,625.5" fill="none" stroke="#1030ff" stroke-width="1"/><path d="M1519.1 465.2L1420.7 623.5M1521.2 464.4L1423.0 622.9M1523.4 463.7L1425.2 622.2M1527.7 463.2L1429.8 621.9M1529.9 462.8L1432.1 621.5M1596.9 481.5L1503.1 642.7M1599.2 483.2L1505.6 644.5M1603.8 486.1L1510.4 647.6M1606.1 488.2L1512.9 649.7M1608.4 490.2L1515.4 651.8M1519.1 465.2L1521.2 464.4L1523.4 463.7L1527.7 463.2L1529.9 462.8L1596.9 481.5L1599.2 483.2L1603.8 486.1L1606.1 488.2L1608.4 490.2zM1521.2 464.4L1606.1 488.2M1523.4 463.7L1603.8 486.1M1527.7 463.2L1599.2 483.2M1420.7 623.5L1423.0 622.9L1425.2 622.2L1429.8 621.9L1432.1 621.5L1503.1 642.7L1505.6 644.5L1510.4 647.6L1512.9 649.7L1515.4 651.8zM1423.0 622.9L1512.9 649.7M1425.2 622.2L1510.4 647.6M1429.8 621.9L1505.6 644.5" stroke="#a02a04" stroke-width="1.35" fill="none" stroke-linejoin="round"/><path d="M1518.9 462.6h1.1M1522.2 463.5h1.1M1525.6 464.5h1.1M1528.9 465.4h1.1M1532.2 466.3h1.1M1535.5 467.2h1.1M1548.9 471.0h1.1M1555.6 472.8h1.1M1558.9 473.8h1.1M1562.3 474.7h1.1M1565.6 475.6h1.1M1582.4 480.3h1.1M1585.8 481.3h1.1M1602.6 486.0h1.1M1515.9 464.3h1.1M1522.5 466.2h1.1M1535.8 469.9h1.1M1555.9 475.5h1.1M1566.0 478.4h1.1M1569.3 479.3h1.1M1576.0 481.2h1.1M1579.4 482.1h1.1M1586.1 484.0h1.1M1596.3 486.8h1.1M1603.0 488.7h1.1M1606.4 489.7h1.1M1609.8 490.6h1.1M1519.5 468.0h1.1M1522.8 468.9h1.1M1529.5 470.8h1.1M1539.5 473.6h1.1M1542.8 474.5h1.1M1546.2 475.4h1.1M1556.2 478.3h1.1M1559.6 479.2h1.1M1562.9 480.1h1.1M1569.7 482.0h1.1M1589.9 487.7h1.1M1593.3 488.6h1.1M1603.4 491.5h1.1M1516.4 469.7h1.1M1519.8 470.7h1.1M1526.4 472.5h1.1M1529.8 473.5h1.1M1536.4 475.3h1.1M1539.8 476.3h1.1M1543.1 477.2h1.1M1546.5 478.1h1.1M1553.2 480.0h1.1M1556.6 481.0h1.1M1559.9 481.9h1.1M1570.0 484.7h1.1M1573.4 485.7h1.1M1576.7 486.6h1.1M1580.1 487.6h1.1M1586.9 489.5h1.1M1590.2 490.4h1.1M1597.0 492.3h1.1M1603.8 494.2h1.1M1516.7 472.4h1.1M1526.7 475.2h1.1M1530.1 476.2h1.1M1533.4 477.1h1.1M1540.1 479.0h1.1M1553.5 482.7h1.1M1556.9 483.7h1.1M1560.3 484.6h1.1M1563.6 485.6h1.1M1567.0 486.5h1.1M1573.7 488.4h1.1M1577.1 489.4h1.1M1590.6 493.1h1.1M1510.3 473.2h1.1M1513.6 474.2h1.1M1527.0 477.9h1.1M1553.8 485.5h1.1M1563.9 488.3h1.1M1577.4 492.1h1.1M1584.2 494.0h1.1M1594.4 496.8h1.1M1597.8 497.8h1.1M1517.3 477.8h1.1M1520.6 478.8h1.1M1527.3 480.7h1.1M1534.0 482.5h1.1M1554.2 488.2h1.1M1560.9 490.1h1.1M1577.8 494.8h1.1M1581.2 495.8h1.1M1598.2 500.6h1.1M1601.6 501.5h1.1M1510.9 478.7h1.1M1520.9 481.5h1.1M1527.6 483.4h1.1M1534.3 485.3h1.1M1537.7 486.2h1.1M1547.8 489.0h1.1M1551.1 490.0h1.1M1574.8 496.6h1.1M1581.5 498.5h1.1M1584.9 499.5h1.1M1598.5 503.3h1.1M1507.8 480.4h1.1M1511.2 481.4h1.1M1517.8 483.3h1.1M1531.3 487.0h1.1M1534.6 488.0h1.1M1551.5 492.7h1.1M1554.8 493.7h1.1M1561.6 495.6h1.1M1581.9 501.3h1.1M1595.5 505.1h1.1M1511.4 484.1h1.1M1518.1 486.0h1.1M1524.8 487.9h1.1M1528.2 488.8h1.1M1531.6 489.8h1.1M1538.3 491.7h1.1M1545.0 493.6h1.1M1551.8 495.5h1.1M1558.5 497.4h1.1M1561.9 498.3h1.1M1568.7 500.2h1.1M1575.5 502.2h1.1M1578.9 503.1h1.1M1582.3 504.1h1.1M1585.7 505.0h1.1M1508.4 485.9h1.1M1531.9 492.5h1.1M1552.1 498.2h1.1M1558.9 500.1h1.1M1572.4 504.0h1.1M1575.8 504.9h1.1M1579.2 505.9h1.1M1592.9 509.7h1.1M1596.3 510.7h1.1M1501.9 486.7h1.1M1505.3 487.7h1.1M1508.6 488.6h1.1M1512.0 489.6h1.1M1525.4 493.4h1.1M1535.5 496.2h1.1M1538.9 497.2h1.1M1555.8 502.0h1.1M1559.2 502.9h1.1M1562.6 503.9h1.1M1566.0 504.8h1.1M1579.6 508.7h1.1M1583.0 509.6h1.1M1586.4 510.6h1.1M1593.2 512.5h1.1M1512.3 492.3h1.1M1519.0 494.2h1.1M1522.4 495.2h1.1M1525.7 496.1h1.1M1529.1 497.1h1.1M1532.5 498.0h1.1M1535.9 499.0h1.1M1542.6 500.9h1.1M1586.8 513.4h1.1M1597.0 516.3h1.1M1499.1 491.3h1.1M1505.8 493.2h1.1M1509.2 494.1h1.1M1519.3 497.0h1.1M1522.6 497.9h1.1M1529.4 499.8h1.1M1536.2 501.7h1.1M1542.9 503.7h1.1M1546.3 504.6h1.1M1556.5 507.5h1.1M1570.1 511.3h1.1M1590.6 517.1h1.1M1506.1 495.9h1.1M1516.2 498.8h1.1M1529.7 502.6h1.1M1536.5 504.5h1.1M1546.6 507.4h1.1M1556.8 510.3h1.1M1590.9 519.9h1.1M1594.4 520.9h1.1M1509.7 499.6h1.1M1513.1 500.6h1.1M1516.5 501.5h1.1M1530.0 505.4h1.1M1543.6 509.2h1.1M1557.2 513.1h1.1M1564.0 515.0h1.1M1570.8 516.9h1.1M1574.2 517.9h1.1M1587.9 521.8h1.1M1591.3 522.7h1.1M1499.9 499.5h1.1M1503.3 500.5h1.1M1516.8 504.3h1.1M1533.7 509.1h1.1M1537.1 510.1h1.1M1547.3 513.0h1.1M1554.1 514.9h1.1M1564.3 517.8h1.1M1571.2 519.7h1.1M1578.0 521.7h1.1M1581.4 522.7h1.1M1584.8 523.6h1.1M1591.7 525.6h1.1M1496.8 501.3h1.1M1503.5 503.2h1.1M1506.9 504.2h1.1M1510.3 505.2h1.1M1527.2 510.0h1.1M1530.6 510.9h1.1M1540.8 513.8h1.1M1544.2 514.8h1.1M1551.0 516.7h1.1M1557.8 518.7h1.1M1571.5 522.5h1.1M1578.3 524.5h1.1M1585.2 526.4h1.1M1493.7 503.1h1.1M1497.1 504.1h1.1M1500.4 505.1h1.1M1503.8 506.0h1.1M1507.2 507.0h1.1M1517.3 509.9h1.1M1524.1 511.8h1.1M1527.5 512.8h1.1M1544.5 517.6h1.1M1561.6 522.4h1.1M1565.0 523.4h1.1M1568.4 524.4h1.1M1582.1 528.3h1.1M1493.9 505.9h1.1M1497.3 506.9h1.1M1500.7 507.8h1.1M1504.1 508.8h1.1M1510.8 510.7h1.1M1517.6 512.7h1.1M1521.0 513.6h1.1M1531.2 516.5h1.1M1534.6 517.5h1.1M1541.4 519.4h1.1M1544.8 520.4h1.1M1548.2 521.4h1.1M1565.3 526.2h1.1M1568.8 527.2h1.1M1575.6 529.2h1.1M1579.1 530.1h1.1M1582.5 531.1h1.1M1490.8 507.7h1.1M1497.6 509.7h1.1M1501.0 510.6h1.1M1511.1 513.5h1.1M1514.5 514.5h1.1M1517.9 515.5h1.1M1538.3 521.3h1.1M1555.4 526.1h1.1M1565.7 529.1h1.1M1569.1 530.0h1.1M1572.6 531.0h1.1M1576.0 532.0h1.1M1582.9 534.0h1.1M1487.7 509.6h1.1M1491.1 510.5h1.1M1508.0 515.4h1.1M1511.4 516.3h1.1M1521.6 519.2h1.1M1528.4 521.2h1.1M1535.2 523.1h1.1M1548.9 527.0h1.1M1559.2 529.9h1.1M1569.5 532.9h1.1M1488.0 512.4h1.1M1491.3 513.3h1.1M1501.5 516.2h1.1M1508.3 518.2h1.1M1521.9 522.0h1.1M1525.3 523.0h1.1M1528.7 524.0h1.1M1542.4 527.9h1.1M1549.2 529.8h1.1M1559.5 532.8h1.1M1573.3 536.7h1.1M1484.8 514.2h1.1M1488.2 515.2h1.1M1491.6 516.1h1.1M1501.8 519.0h1.1M1525.6 525.8h1.1M1532.4 527.8h1.1M1535.9 528.8h1.1M1542.7 530.7h1.1M1546.1 531.7h1.1M1549.6 532.7h1.1M1556.4 534.6h1.1M1563.3 536.6h1.1M1570.2 538.6h1.1M1485.1 517.0h1.1M1488.5 518.0h1.1M1502.0 521.8h1.1M1508.9 523.8h1.1M1529.3 529.6h1.1M1549.9 535.5h1.1M1553.3 536.5h1.1M1556.8 537.5h1.1M1560.2 538.5h1.1M1563.6 539.5h1.1M1567.1 540.4h1.1M1574.0 542.4h1.1M1577.4 543.4h1.1M1481.9 518.8h1.1M1492.1 521.7h1.1M1498.9 523.7h1.1M1502.3 524.7h1.1M1509.1 526.6h1.1M1512.5 527.6h1.1M1519.4 529.5h1.1M1529.6 532.5h1.1M1533.0 533.5h1.1M1539.9 535.4h1.1M1543.3 536.4h1.1M1553.6 539.3h1.1M1557.1 540.3h1.1M1564.0 542.3h1.1M1567.4 543.3h1.1M1570.9 544.3h1.1M1492.4 524.6h1.1M1495.8 525.5h1.1M1502.6 527.5h1.1M1506.0 528.5h1.1M1529.9 535.3h1.1M1533.4 536.3h1.1M1536.8 537.3h1.1M1540.2 538.3h1.1M1543.7 539.3h1.1M1547.1 540.2h1.1M1550.6 541.2h1.1M1567.8 546.2h1.1M1578.2 549.1h1.1M1482.4 524.5h1.1M1523.4 536.2h1.1M1526.8 537.2h1.1M1530.2 538.2h1.1M1544.0 542.1h1.1M1547.4 543.1h1.1M1557.8 546.1h1.1M1564.7 548.0h1.1M1571.6 550.0h1.1M1479.3 526.3h1.1M1496.3 531.2h1.1M1499.7 532.2h1.1M1503.1 533.2h1.1M1506.6 534.1h1.1M1540.9 544.0h1.1M1565.0 550.9h1.1M1572.0 552.9h1.1M1476.1 528.2h1.1M1479.5 529.1h1.1M1489.7 532.1h1.1M1493.1 533.1h1.1M1503.4 536.0h1.1M1517.1 539.9h1.1M1520.5 540.9h1.1M1524.0 541.9h1.1M1537.7 545.9h1.1M1544.6 547.8h1.1M1551.5 549.8h1.1M1555.0 550.8h1.1M1558.4 551.8h1.1M1565.4 553.8h1.1M1568.8 554.8h1.1M1476.4 531.0h1.1M1493.4 535.9h1.1M1500.3 537.9h1.1M1503.7 538.9h1.1M1507.1 539.8h1.1M1514.0 541.8h1.1M1524.3 544.8h1.1M1527.7 545.8h1.1M1531.2 546.8h1.1M1538.1 548.7h1.1M1541.5 549.7h1.1M1476.6 533.8h1.1M1480.0 534.8h1.1M1483.4 535.8h1.1M1500.5 540.7h1.1M1507.4 542.7h1.1M1514.3 544.7h1.1M1517.7 545.7h1.1M1521.1 546.7h1.1M1531.5 549.6h1.1M1541.8 552.6h1.1M1559.1 557.6h1.1M1473.4 535.7h1.1M1483.7 538.7h1.1M1487.1 539.6h1.1M1490.5 540.6h1.1M1497.4 542.6h1.1M1504.2 544.6h1.1M1514.6 547.6h1.1M1524.9 550.5h1.1M1531.8 552.5h1.1M1535.2 553.5h1.1M1542.2 555.5h1.1M1552.6 558.5h1.1M1559.5 560.5h1.1M1569.9 563.5h1.1M1473.7 538.6h1.1M1477.1 539.5h1.1M1480.5 540.5h1.1M1494.2 544.5h1.1M1497.6 545.5h1.1M1501.1 546.5h1.1M1514.8 550.4h1.1M1535.5 556.4h1.1M1539.0 557.4h1.1M1566.8 565.4h1.1M1470.5 540.4h1.1M1484.2 544.4h1.1M1491.0 546.4h1.1M1494.5 547.4h1.1M1497.9 548.3h1.1M1501.4 549.3h1.1M1508.2 551.3h1.1M1511.7 552.3h1.1M1522.0 555.3h1.1M1525.5 556.3h1.1M1535.9 559.3h1.1M1542.8 561.3h1.1M1549.7 563.3h1.1M1556.7 565.3h1.1M1563.7 567.3h1.1M1470.7 543.3h1.1M1474.1 544.3h1.1M1481.0 546.3h1.1M1484.4 547.3h1.1M1487.9 548.2h1.1M1491.3 549.2h1.1M1498.2 551.2h1.1M1501.6 552.2h1.1M1525.8 559.2h1.1M1532.7 561.2h1.1M1539.6 563.2h1.1M1553.5 567.2h1.1M1564.0 570.2h1.1M1471.0 546.2h1.1M1481.3 549.1h1.1M1484.7 550.1h1.1M1498.5 554.1h1.1M1501.9 555.1h1.1M1505.4 556.1h1.1M1533.0 564.1h1.1M1546.9 568.1h1.1M1550.4 569.1h1.1M1553.9 570.2h1.1M1557.4 571.2h1.1M1560.9 572.2h1.1M1564.4 573.2h1.1M1471.2 549.0h1.1M1474.6 550.0h1.1M1481.5 552.0h1.1M1488.4 554.0h1.1M1495.3 556.0h1.1M1498.7 557.0h1.1M1516.0 562.0h1.1M1526.4 565.0h1.1M1529.9 566.0h1.1M1533.3 567.0h1.1M1557.7 574.1h1.1M1471.4 551.9h1.1M1481.8 554.9h1.1M1485.2 555.9h1.1M1492.1 557.9h1.1M1499.0 559.9h1.1M1502.5 560.9h1.1M1537.1 571.0h1.1M1558.1 577.0h1.1M1461.4 551.8h1.1M1464.8 552.8h1.1M1471.7 554.8h1.1M1475.1 555.8h1.1M1482.0 557.8h1.1M1485.4 558.8h1.1M1488.9 559.8h1.1M1495.8 561.8h1.1M1506.2 564.8h1.1M1509.6 565.8h1.1M1513.1 566.8h1.1M1516.6 567.8h1.1M1540.9 574.9h1.1M1547.9 576.9h1.1M1554.9 579.0h1.1M1461.6 554.7h1.1M1482.3 560.7h1.1M1496.1 564.7h1.1M1499.5 565.7h1.1M1503.0 566.7h1.1M1509.9 568.8h1.1M1516.9 570.8h1.1M1541.3 577.9h1.1M1548.3 579.9h1.1M1458.4 556.6h1.1M1461.8 557.6h1.1M1465.3 558.6h1.1M1475.6 561.6h1.1M1479.0 562.6h1.1M1482.5 563.6h1.1M1489.4 565.6h1.1M1499.8 568.7h1.1M1506.7 570.7h1.1M1517.2 573.7h1.1M1541.6 580.8h1.1M1545.1 581.8h1.1M1462.1 560.5h1.1M1472.4 563.5h1.1M1489.7 568.6h1.1M1493.2 569.6h1.1M1524.5 578.7h1.1M1527.9 579.7h1.1M1534.9 581.7h1.1M1541.9 583.8h1.1M1548.9 585.8h1.1M1552.4 586.8h1.1M1555.9 587.8h1.1M1462.3 563.4h1.1M1465.7 564.4h1.1M1476.1 567.5h1.1M1479.5 568.5h1.1M1493.4 572.5h1.1M1500.4 574.5h1.1M1507.3 576.6h1.1M1510.8 577.6h1.1M1517.8 579.6h1.1M1524.7 581.6h1.1M1528.2 582.6h1.1M1535.2 584.7h1.1M1538.7 585.7h1.1M1459.1 565.4h1.1M1462.5 566.4h1.1M1469.4 568.4h1.1M1476.3 570.4h1.1M1483.3 572.4h1.1M1504.1 578.5h1.1M1507.6 579.5h1.1M1511.1 580.5h1.1M1514.6 581.5h1.1M1525.1 584.6h1.1M1546.1 590.7h1.1M1553.1 592.8h1.1M1452.4 566.3h1.1M1469.7 571.3h1.1M1476.6 573.3h1.1M1487.0 576.4h1.1M1500.9 580.4h1.1M1507.9 582.5h1.1M1511.4 583.5h1.1M1521.9 586.5h1.1M1539.4 591.6h1.1M1549.9 594.7h1.1M1456.1 570.2h1.1M1466.4 573.2h1.1M1469.9 574.2h1.1M1476.8 576.3h1.1M1480.3 577.3h1.1M1487.3 579.3h1.1M1490.7 580.3h1.1M1494.2 581.4h1.1M1501.2 583.4h1.1M1504.7 584.4h1.1M1508.2 585.4h1.1M1511.7 586.4h1.1M1529.2 591.6h1.1M1532.7 592.6h1.1M1539.7 594.6h1.1M1546.8 596.7h1.1M1463.2 575.2h1.1M1491.0 583.3h1.1M1501.5 586.3h1.1M1505.0 587.4h1.1M1512.0 589.4h1.1M1515.5 590.4h1.1M1522.5 592.5h1.1M1526.0 593.5h1.1M1529.5 594.5h1.1M1533.0 595.6h1.1M1540.0 597.6h1.1M1543.5 598.7h1.1M1547.1 599.7h1.1M1456.5 576.1h1.1M1463.4 578.1h1.1M1466.9 579.1h1.1M1470.4 580.1h1.1M1477.3 582.2h1.1M1484.3 584.2h1.1M1487.8 585.2h1.1M1491.3 586.3h1.1M1498.3 588.3h1.1M1526.3 596.5h1.1M1529.8 597.5h1.1M1547.4 602.7h1.1M1446.3 576.0h1.1M1453.2 578.0h1.1M1463.7 581.1h1.1M1467.1 582.1h1.1M1470.6 583.1h1.1M1477.6 585.1h1.1M1491.5 589.2h1.1M1523.1 598.5h1.1M1526.6 599.5h1.1M1544.2 604.7h1.1M1446.5 578.9h1.1M1450.0 580.0h1.1M1460.4 583.0h1.1M1463.9 584.0h1.1M1467.4 585.0h1.1M1477.8 588.1h1.1M1481.3 589.1h1.1M1443.3 580.9h1.1M1446.7 581.9h1.1M1464.1 587.0h1.1M1471.1 589.0h1.1M1481.6 592.1h1.1M1499.1 597.3h1.1M1509.6 600.3h1.1M1443.5 583.8h1.1M1450.4 585.9h1.1M1457.4 587.9h1.1M1474.8 593.0h1.1M1488.8 597.2h1.1M1492.3 598.2h1.1M1495.9 599.2h1.1M1499.4 600.3h1.1M1506.4 602.3h1.1M1517.0 605.4h1.1M1520.5 606.5h1.1M1524.0 607.5h1.1M1527.5 608.5h1.1M1538.1 611.6h1.1M1447.2 587.8h1.1M1450.6 588.9h1.1M1464.6 593.0h1.1M1471.6 595.0h1.1M1496.1 602.2h1.1M1499.6 603.3h1.1M1513.7 607.4h1.1M1524.3 610.5h1.1M1531.4 612.6h1.1M1443.9 589.8h1.1M1447.4 590.8h1.1M1450.9 591.8h1.1M1489.4 603.2h1.1M1492.9 604.2h1.1M1510.5 609.4h1.1M1514.0 610.4h1.1M1528.2 614.6h1.1M1535.2 616.7h1.1M1538.8 617.7h1.1M1447.6 593.8h1.1M1454.6 595.8h1.1M1461.6 597.9h1.1M1465.1 598.9h1.1M1475.6 602.0h1.1M1479.1 603.1h1.1M1510.8 612.4h1.1M1514.3 613.5h1.1M1517.8 614.5h1.1M1521.4 615.5h1.1M1535.6 619.7h1.1M1437.4 593.7h1.1M1447.8 596.8h1.1M1451.3 597.8h1.1M1458.3 599.9h1.1M1468.8 603.0h1.1M1472.3 604.0h1.1M1479.3 606.1h1.1M1507.5 614.4h1.1M1511.1 615.5h1.1M1514.6 616.5h1.1M1518.2 617.5h1.1M1532.3 621.7h1.1M1448.0 599.8h1.1M1451.5 600.8h1.1M1455.0 601.9h1.1M1469.0 606.0h1.1M1476.1 608.1h1.1M1483.1 610.1h1.1M1493.7 613.3h1.1M1504.3 616.4h1.1M1507.8 617.4h1.1M1514.9 619.5h1.1M1518.4 620.6h1.1M1522.0 621.6h1.1M1532.6 624.8h1.1M1434.3 598.7h1.1M1437.8 599.7h1.1M1444.8 601.8h1.1M1448.2 602.8h1.1M1458.8 605.9h1.1M1469.3 609.0h1.1M1476.3 611.1h1.1M1486.9 614.2h1.1M1490.4 615.3h1.1M1501.0 618.4h1.1M1508.1 620.5h1.1M1529.4 626.8h1.1M1437.9 602.7h1.1M1459.0 608.9h1.1M1473.0 613.1h1.1M1476.6 614.1h1.1M1483.6 616.2h1.1M1515.5 625.6h1.1M1519.0 626.7h1.1M1522.6 627.8h1.1M1526.2 628.8h1.1M1529.7 629.9h1.1M1431.2 603.6h1.1M1438.2 605.7h1.1M1448.7 608.8h1.1M1455.7 610.9h1.1M1459.2 612.0h1.1M1462.7 613.0h1.1M1466.3 614.0h1.1M1469.8 615.1h1.1M1480.4 618.2h1.1M1483.9 619.3h1.1M1487.4 620.3h1.1M1491.0 621.4h1.1M1498.1 623.5h1.1M1501.6 624.5h1.1M1508.7 626.6h1.1M1512.3 627.7h1.1M1519.4 629.8h1.1M1526.5 631.9h1.1M1431.3 606.7h1.1M1434.9 607.7h1.1M1441.9 609.8h1.1M1448.9 611.9h1.1M1452.4 612.9h1.1M1455.9 613.9h1.1M1459.4 615.0h1.1M1473.5 619.2h1.1M1477.1 620.2h1.1M1491.2 624.4h1.1M1501.9 627.6h1.1M1509.0 629.7h1.1M1512.5 630.7h1.1M1516.1 631.8h1.1M1523.2 633.9h1.1M1526.8 635.0h1.1M1435.1 610.7h1.1M1442.1 612.8h1.1M1445.6 613.9h1.1M1449.1 614.9h1.1M1463.2 619.1h1.1M1473.8 622.2h1.1M1480.9 624.3h1.1M1484.4 625.4h1.1M1488.0 626.4h1.1M1491.5 627.5h1.1M1495.1 628.5h1.1M1498.6 629.6h1.1M1516.4 634.9h1.1M1520.0 635.9h1.1M1424.7 610.6h1.1M1428.2 611.7h1.1M1435.3 613.8h1.1M1442.3 615.9h1.1M1452.8 619.0h1.1M1456.4 620.0h1.1M1459.9 621.1h1.1M1474.0 625.3h1.1M1484.7 628.4h1.1M1491.8 630.6h1.1M1509.6 635.8h1.1M1513.1 636.9h1.1M1424.9 613.7h1.1M1428.4 614.7h1.1M1442.5 618.9h1.1M1456.6 623.1h1.1M1460.1 624.2h1.1M1474.3 628.4h1.1M1481.4 630.5h1.1M1492.1 633.6h1.1M1502.7 636.8h1.1M1509.9 638.9h1.1M1513.4 640.0h1.1M1520.6 642.1h1.1M1425.1 616.7h1.1M1435.7 619.9h1.1M1442.7 622.0h1.1M1446.2 623.0h1.1M1463.9 628.3h1.1M1471.0 630.4h1.1M1485.2 634.6h1.1M1495.9 637.8h1.1M1513.7 643.1h1.1M1428.8 620.8h1.1M1432.3 621.9h1.1M1442.9 625.0h1.1M1450.0 627.1h1.1M1460.6 630.3h1.1M1474.8 634.5h1.1M1485.5 637.7h1.1M1489.0 638.8h1.1M1492.6 639.8h1.1M1510.5 645.1h1.1M1521.2 648.4h1.1M1422.0 621.8h1.1M1436.1 626.0h1.1M1443.1 628.1h1.1M1453.7 631.3h1.1M1457.3 632.3h1.1M1467.9 635.5h1.1M1478.6 638.7h1.1M1492.9 642.9h1.1M1500.0 645.1h1.1M1503.6 646.1h1.1M1510.7 648.3h1.1M1517.9 650.4h1.1M1425.7 625.9h1.1M1439.8 630.1h1.1M1450.4 633.3h1.1M1454.0 634.3h1.1M1461.1 636.5h1.1M1471.7 639.6h1.1M1478.9 641.8h1.1M1493.1 646.0h1.1M1503.9 649.2h1.1M1518.2 653.5h1.1" stroke="#167a18" stroke-width="1.1" fill="none"/><circle cx="1517.3" cy="554.9" r="1.2" fill="#f8c000"/><path d="M1246.9 674.4L1254 740" stroke="#108a20" stroke-width="1"/><path d="M1251.2 736l5.6-0.6l-2.4 8z" fill="#108a20"/><text x="1253.5" y="752.5" font-size="10" fill="#108a20">Z</text><path d="M1246.9 674.4L1332 701" stroke="#ff0000" stroke-width="1.4"/><path d="M1328 696l12 7.5l-14 1z" fill="#ff0000"/><text x="1350" y="709" font-size="10" fill="#ff2020">X</text><path d="M1246 675L1292 609" stroke="#0000ff" stroke-width="1"/><path d="M1283 611l9-5l-3 9z" fill="#0000ff"/><path d="M1262 646l7-2l-3 6z" fill="#0000ff"/><text x="1296" y="598" font-size="10" fill="#2020ff">Y</text><path d="M1750 467l-6-2l5-1l2-4l1 5z" fill="#0000ff"/><defs><linearGradient id="gcone" x1="0" y1="0" x2="1" y2="0"><stop offset="0" stop-color="#ff5a14"/><stop offset="0.6" stop-color="#e02808"/><stop offset="1" stop-color="#a00800"/></linearGradient></defs><path d="M1680 604.2L1680.8 609.3L1726 619.2L1745 622.8L1726 617.4z" fill="url(#gcone)"/><path d="M1680 604.2L1726 617.6" stroke="#c81808" stroke-width="0.8"/><g><path d="M1790 194L1806 198" stroke="#f08080" stroke-width="1.2"/><path d="M1837 166v12" stroke="#70c070" stroke-width="1.4"/><polygon points="1821.0,167.0 1865.0,178.0 1851.0,203.0 1806.0,192.0" fill="#b4d8b4" stroke="#9aa8a0" stroke-width="1"/><polygon points="1806.0,192.0 1851.0,203.0 1846.0,241.0 1802.0,229.0" fill="#bcbce4" stroke="#a0a0b8" stroke-width="1"/><polygon points="1851.0,203.0 1865.0,178.0 1864.0,215.0 1846.0,241.0" fill="#cfa6ac" stroke="#a89aa0" stroke-width="1"/><path d="M1837 178v22" stroke="#90d090" stroke-width="1.2"/><path d="M1806 193L1878 214" stroke="#f09090" stroke-width="1" opacity="0.7"/><path d="M1856 209L1878 214" stroke="#f07070" stroke-width="1.3"/><path d="M1836 201L1820 229" stroke="#7070f0" stroke-width="1.2"/><path d="M1829 237v5" stroke="#50a850" stroke-width="1.3"/><text transform="translate(1809.5,213.5) rotate(15)" font-family="Liberation Mono, monospace" font-size="10" font-weight="bold" fill="#5a5a74" textLength="33" lengthAdjust="spacingAndGlyphs">Front</text><text transform="matrix(0.95,0.24,-0.5,0.5,1828,180)" font-family="Liberation Mono, monospace" font-size="10" font-weight="bold" fill="#7a9a7a">Top</text><text transform="translate(1857.5,222) rotate(-63)" font-family="Liberation Mono, monospace" font-size="8" font-weight="bold" fill="#8a6a72" opacity="0.75" textLength="20" lengthAdjust="spacingAndGlyphs">Right</text><text x="1885" y="216" font-size="9" fill="#f07070">X</text><text x="1849" y="173" font-size="9" fill="#6868f0">Y</text><text x="1829" y="248" font-size="9" fill="#50a850">Z</text></g></svg></div>
<div id="bottom"><div class="abs" style="left:309px;top:1036px;width:1606px;height:41px;background:#f0f0f0;"></div><div class="abs" style="left:309px;top:1035px;width:1606px;height:2px;background:#111111;"></div><div class="abs" style="left:309px;top:1077px;width:1606px;height:1px;background:#9c9c9c;"></div><div class="abs" style="left:0px;top:1078px;width:1920px;height:8px;background:#f5f6f8;"></div><div class="abs" style="left:0px;top:1082px;width:1917px;height:4px;background:#ffffff;border-top:1px solid #dcdcdc;border-right:1px solid #dcdcdc;box-sizing:border-box;"></div><div class="abs" style="left:1914px;top:128px;width:6px;height:950px;background:#f5f6f8;"></div><div class="abs" style="left:1759px;top:1057px;width:134px;height:20px;background:#ffffff;border:1px solid #000;box-sizing:border-box;"></div><div class="abs" style="left:309px;top:1037px;width:20px;height:17px;background:#f0f0f0;border-right:2px solid #a0a0a0;border-bottom:2px solid #a0a0a0;border-left:1px solid #fff;box-sizing:border-box;"></div><div class="abs" style="left:330px;top:1037px;width:20px;height:17px;background:#f0f0f0;border-right:2px solid #a0a0a0;border-bottom:2px solid #a0a0a0;border-left:1px solid #fff;box-sizing:border-box;"></div><div class="abs" style="left:351px;top:1037px;width:20px;height:17px;background:#f0f0f0;border-right:2px solid #a0a0a0;border-bottom:2px solid #a0a0a0;border-left:1px solid #fff;box-sizing:border-box;"></div><div class="abs" style="left:371px;top:1037px;width:20px;height:17px;background:#f0f0f0;border-right:2px solid #a0a0a0;border-bottom:2px solid #a0a0a0;border-left:1px solid #fff;box-sizing:border-box;"></div><div class="abs" style="left:392px;top:1037px;width:20px;height:17px;background:#f0f0f0;border-right:2px solid #a0a0a0;border-bottom:2px solid #a0a0a0;border-left:1px solid #fff;box-sizing:border-box;"></div><svg width="1920" height="1086" viewBox="0 0 1920 1086" style="left:0;top:0" font-family="Liberation Sans, sans-serif" ><g fill="#000"><path d="M315 1040h1.6v10h-1.6zM322 1040v10l-5.5-5z"/><path d="M343 1040v10l-5.5-5z"/><path d="M377 1040v10l5.5-5z" fill="#a8a8a8"/><path d="M399 1040v10l5.5-5zM405 1040h1.6v10h-1.6z"/></g><text x="360.5" y="1050" font-size="12" text-anchor="middle" font-family="DejaVu Sans, Liberation Sans, sans-serif" font-weight="bold" fill="#000">#</text><path d="M414 1037l8.5 16.5H512L520.5 1037z" fill="#f0f0f0"/><path d="M414 1037l8.5 16.5H512L520.5 1037" fill="none" stroke="#000" stroke-width="1"/><text x="467.25" y="1049" font-size="11" text-anchor="middle" font-family="DejaVu Sans, Liberation Sans, sans-serif" fill="#000" textLength="78" lengthAdjust="spacingAndGlyphs">Stage 1 = 0 d</text><path d="M514 1037l8.5 16.5H619.8L628.3 1037z" fill="#f0f0f0"/><path d="M514 1037l8.5 16.5H619.8L628.3 1037" fill="none" stroke="#000" stroke-width="1"/><text x="571.15" y="1049" font-size="11" text-anchor="middle" font-family="DejaVu Sans, Liberation Sans, sans-serif" fill="#000" textLength="84" lengthAdjust="spacingAndGlyphs">Stage 2 = 30 d</text><path d="M621.8 1037l8.5 16.5H728L736.5 1037z" fill="#f0f0f0"/><path d="M621.8 1037l8.5 16.5H728L736.5 1037" fill="none" stroke="#000" stroke-width="1"/><text x="679.15" y="1049" font-size="11" text-anchor="middle" font-family="DejaVu Sans, Liberation Sans, sans-serif" fill="#000" textLength="84" lengthAdjust="spacingAndGlyphs">Stage 3 = 60 d</text><path d="M730 1037l8.5 16.5H843L851.5 1037z" fill="#f0f0f0"/><path d="M730 1037l8.5 16.5H843L851.5 1037" fill="none" stroke="#000" stroke-width="1"/><text x="790.75" y="1049" font-size="11" text-anchor="middle" font-family="DejaVu Sans, Liberation Sans, sans-serif" fill="#000" textLength="91.5" lengthAdjust="spacingAndGlyphs">Stage 4 = 100 d</text><path d="M845 1037l8.5 16.5H960L968.5 1037z" fill="#f0f0f0"/><path d="M845 1037l8.5 16.5H960L968.5 1037" fill="none" stroke="#000" stroke-width="1"/><text x="906.75" y="1049" font-size="11" text-anchor="middle" font-family="DejaVu Sans, Liberation Sans, sans-serif" fill="#000" textLength="92" lengthAdjust="spacingAndGlyphs">Stage 5 = 200 d</text><path d="M962 1037l8.5 16.5H1076.3L1084.8 1037z" fill="#f0f0f0"/><path d="M962 1037l8.5 16.5H1076.3L1084.8 1037" fill="none" stroke="#000" stroke-width="1"/><text x="1023.4" y="1049" font-size="11" text-anchor="middle" font-family="DejaVu Sans, Liberation Sans, sans-serif" fill="#000" textLength="91.5" lengthAdjust="spacingAndGlyphs">Stage 6 = 300 d</text><path d="M1078.3 1037l8.5 16.5H1193L1201.5 1037z" fill="#ffffff"/><path d="M1078.3 1037l8.5 16.5H1193L1201.5 1037" fill="none" stroke="#000" stroke-width="1"/><text x="1139.9" y="1049" font-size="11" text-anchor="middle" font-family="DejaVu Sans, Liberation Sans, sans-serif" font-weight="bold" fill="#000" textLength="101" lengthAdjust="spacingAndGlyphs">Stage 7 = 400 d</text></svg></div>
</body></html>
